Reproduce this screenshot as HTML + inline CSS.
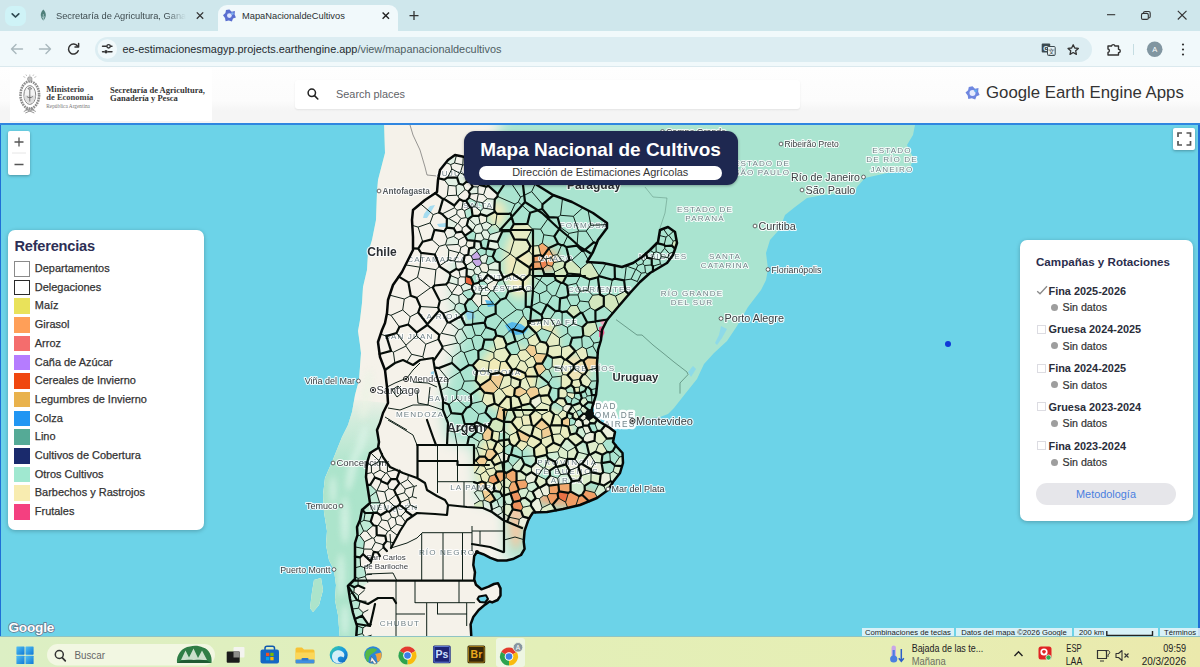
<!DOCTYPE html>
<html lang="es">
<head>
<meta charset="utf-8">
<title>MapaNacionaldeCultivos</title>
<style>
*{box-sizing:border-box;margin:0;padding:0}
html,body{width:1200px;height:667px;overflow:hidden;background:#6cd3e8;font-family:"Liberation Sans",sans-serif;color:#222}
.abs{position:absolute}
#tabbar{left:0;top:0;width:1200px;height:31px;background:#cfe7ec}
#toolbar{left:0;top:31px;width:1200px;height:36px;background:#f1f9fb;border-bottom:1px solid #dbe9ee}
#urlpill{left:95px;top:37px;width:997px;height:25px;border-radius:12.5px;background:#dcedf2}
#acttab{left:218px;top:5px;width:180px;height:27px;background:#f1f9fb;border-radius:9px 9px 0 0}
.tabtxt{font-size:9.3px;line-height:12px;color:#2a2f31;white-space:nowrap;top:9.5px}
#chev{left:5px;top:6px;width:21px;height:20px;border-radius:7px;background:#cff3f7}
#url{left:122.5px;top:43px;font-size:10.9px;line-height:13px;color:#1f2a2e;white-space:nowrap}
#url span{color:#4f5e63}
#header{left:0;top:67px;width:1200px;height:56px;background:linear-gradient(#fefefe 0,#fcfcfc 60%,#f5f5f5 78%,#f5f5f5 100%)}
#logoimg{left:10px;top:69px;width:202px;height:52px;background:#fff}
#search{left:295px;top:79.5px;width:505px;height:29.5px;background:#fff;border-radius:3px;box-shadow:0 1px 2px rgba(0,0,0,.08)}
#map{left:0;top:125px;width:1200px;height:512px;background:#6cd3e8;overflow:hidden}
#mapline{left:0;top:123px;width:1200px;height:2px;background:#2f86e0}
#taskbar{left:0;top:636.5px;width:1200px;height:30.5px;background:linear-gradient(90deg,#dcefc4 0%,#e3efb8 45%,#e6eeb4 75%,#ebe9ac 100%)}
.serif{font-family:"Liberation Serif",serif}
.panel{background:#fff;border-radius:7px;box-shadow:0 1px 4px rgba(0,0,0,.25)}
#legend{left:8px;top:230px;width:195.5px;height:299.5px}
#legend h3{position:absolute;left:6.4px;top:8px;font-size:14.6px;font-weight:bold;color:#2d2f55;letter-spacing:-0.2px}
.lg{position:absolute;left:6px;height:16px;font-size:10.96px;line-height:13px;color:#333;white-space:nowrap}
.lg i{position:absolute;left:0;top:0;width:16.3px;height:15.6px;display:block}
.lg span{position:absolute;left:20.8px;top:1px;-webkit-text-stroke:.25px #333}
svg text{font-family:"Liberation Sans",sans-serif}
.hl2{stroke-width:4.5px !important;stroke-opacity:.95 !important}
.hl{paint-order:stroke;stroke:#fff;stroke-width:2.2px;stroke-opacity:.85;stroke-linejoin:round}
#camp{left:1020px;top:239.5px;width:173px;height:281px}

#titlebox{left:463.5px;top:130.5px;width:274px;height:54px;border-radius:11px;background:#1e2850;box-shadow:0 1px 3px rgba(0,0,0,.3)}
#titlebox b{position:absolute;left:0;width:274px;top:7px;text-align:center;color:#fff;font-size:19px;line-height:24px;white-space:nowrap}
#titlebox span{position:absolute;left:15px;top:35.5px;width:243.5px;height:13.5px;border-radius:7px;background:#fff;color:#333;font-size:10.9px;line-height:13.5px;text-align:center;white-space:nowrap}
#zoomctl{left:8px;top:130.5px;width:22px;height:44px;background:#fff;border-radius:2px;box-shadow:0 1px 3px rgba(0,0,0,.3)}
#fsbtn{left:1172.5px;top:128px;width:22px;height:22px;background:#fff;border-radius:2px;box-shadow:0 1px 3px rgba(0,0,0,.3)}
#camp h4{position:absolute;left:16px;top:15.5px;font-size:11.6px;font-weight:bold;color:#2a2d4d;white-space:nowrap}
.cr{position:absolute;left:16px;font-size:10.9px;font-weight:bold;color:#2a2d3a;white-space:nowrap;height:14px;line-height:14px}
.cr i{position:absolute;left:1px;top:2.5px;width:9px;height:9px;border:1px solid #dcdce2;background:#fff;display:block}
.cr span{position:absolute;left:12.5px;top:0}
.sd{position:absolute;left:31px;font-size:10.7px;color:#333;white-space:nowrap;height:14px;line-height:14px}
.sd i{position:absolute;left:0;top:3.5px;width:7px;height:7px;border-radius:50%;background:#9e9e9e;display:block}
.sd span{position:absolute;left:11.5px;top:0;-webkit-text-stroke:.2px #333}
#metod{position:absolute;left:16px;top:243px;width:140px;height:22px;border-radius:11px;background:#e6e6ea;color:#4a7fe0;font-size:10.9px;line-height:22px;text-align:center}
#gee{left:986px;top:83px;font-size:16.8px;color:#333;white-space:nowrap;line-height:20px}
#sp{left:336px;top:87px;font-size:10.9px;color:#5f6368;white-space:nowrap;line-height:14px}
.tb{position:absolute;white-space:nowrap}

#attr{left:862px;top:627.5px;width:338px;height:9.5px}
#attr div{position:absolute;top:0;height:9.5px;background:rgba(240,248,250,.82);font-size:7.7px;line-height:9.5px;color:#222;white-space:nowrap;text-align:center}
#glogo{left:8.5px;top:619.5px;font-size:13.6px;font-weight:bold;color:#fff;letter-spacing:-0.2px;-webkit-text-stroke:1.5px #66748a;paint-order:stroke fill}
#tsearch{left:46.5px;top:643px;width:167px;height:20px;border-radius:10px;background:#f1f7e0}
.tk{position:absolute;font-size:10.5px;color:#222;white-space:nowrap;line-height:12px}
.edgeL{left:0;top:125px;width:1.2px;height:512px;background:#1f6fd6}
.edgeR{left:1198.4px;top:125px;width:1.6px;height:512px;background:#1f6fd6}
#map svg{filter:blur(.35px)}
</style>
</head>
<body>
<div id="tabbar" class="abs"></div>
<div id="toolbar" class="abs"></div>
<div id="acttab" class="abs"></div>
<div id="chev" class="abs"></div>
<div id="urlpill" class="abs"></div>
<div class="abs tabtxt" style="left:56px;color:#3f4c50;width:130px;overflow:hidden;-webkit-mask-image:linear-gradient(90deg,#000 85%,transparent 100%);mask-image:linear-gradient(90deg,#000 85%,transparent 100%)">Secretaría de Agricultura, Ganadería</div>
<div class="abs tabtxt" style="left:242px">MapaNacionaldeCultivos</div>
<div id="url" class="abs">ee-estimacionesmagyp.projects.earthengine.app<span>/view/mapanacionaldecultivos</span></div>
<div id="header" class="abs"></div>
<div id="logoimg" class="abs"></div>
<div id="search" class="abs"></div>
<div id="mapline" class="abs"></div>
<div id="map" class="abs">
<svg class="abs" style="left:0;top:-125px" width="1200" height="667" viewBox="0 0 1200 667">
<defs>
<clipPath id="baclip"><path d="M594 398L594 414L600 421L610 427L616 431L650 431L650 398Z"/></clipPath>
<clipPath id="argclip"><path d="M455 155L448 160L440 170L438 180L437 192L425 200L413 210L412 220L413 237L413 250L408 260L402 272L393 285L388 300L387 313L385 323L382 330L378 342L380 357L385 370L387 387L388 403L383 413L380 423L377 430L379 442L378 448L370 453L367 463L366 477L368 490L370 503L362 510L360 520L357 527L357.5 535L355 543L355 559L355 579L348 586L350 599L353 613L357 626L356 640L471.5 640L470.6 624.4L473.3 617L478.7 610L485 604.6L489.5 601.5L492.2 602.4L497.6 600L500.5 595.6L500.5 588.4L498 583.3L494 584L488.6 586.6L481.4 589.3L476 584.8L474.2 579.4L475 572.2L473.3 565L474.2 556L476.9 552L483.2 554.2L490.4 557.8L497.6 560.5L506.6 560.5L513.8 558.7L521 555L524.6 548.8L523.7 541.6L524.6 530.8L528 521L530 517L533 512.5L547 512L563 509L580 505L597 498L608 490L613 482L620 473L623 463L622.5 453L617 447L613 442L615 432L610 428L600 422L592 415L592 408L596 395L597.5 381L597 363L598 350L601 340L602 330L607 320L618 307L630 293L640 282L650 273L667 263L673 255L677 243L675 232L668 227L660 230L658 242L650 250L642 257L633 263L622 267L603 263L587 262L593 252L598 240L607 228L607 223L593 213L572 202L553 195L537 185L525 175L520 165L500 160L470 158Z"/></clipPath>
<filter id="b4" x="-30%" y="-30%" width="160%" height="160%"><feGaussianBlur stdDeviation="4"/></filter>
<clipPath id="landclip"><path d="M384 121L385 153L378 180L377 192L376 220L372 240L368 253L367 270L363 287L362 303L360 320L358 331L360 345L361 353L359 380L355 395L352 412L348 425L342 437L336 452L332 462L325 478L323 495L324 512L327 531L326 545L329 560L334 570L336 585L335 600L338 615L340 640L471.5 640L470.6 624.4L473.3 617L478.7 610L485 604.6L489.5 601.5L492.2 602.4L497.6 600L500.5 595.6L500.5 588.4L498 583.3L494 584L488.6 586.6L481.4 589.3L476 584.8L474.2 579.4L475 572.2L473.3 565L474.2 556L476.9 552L483.2 554.2L490.4 557.8L497.6 560.5L506.6 560.5L513.8 558.7L521 555L524.6 548.8L523.7 541.6L524.6 530.8L528 521L530 517L533 512.5L547 512L563 509L580 505L597 498L608 490L613 482L620 473L623 463L622.5 453L617 447L613 442L615 432L610 428L600 422L592 415L593 408L600 409L617 417L633 421L642 419.5L660 417L668 414L674 408L685 394L697 379L704 364L714 353L727 341L737 326L748 307L761 290L766 280L768 269L766 253L770 240L778 231L782 223L785 215L795 207L807 198L823 195L855 193L857 187L865 178L887 173L910 170L913 157L907 145L913 135L915 125L916 121Z"/><path d="M314 580L321 578L323 590L319 605L313 612L310 608L312 592Z"/></clipPath>
<filter id="b8" x="-30%" y="-30%" width="160%" height="160%"><feGaussianBlur stdDeviation="7"/></filter>
<filter id="b3" x="-30%" y="-30%" width="160%" height="160%"><feGaussianBlur stdDeviation="3"/></filter>
<linearGradient id="chs" gradientUnits="userSpaceOnUse" x1="0" y1="395" x2="0" y2="470"><stop offset="0" stop-color="#a6e2c9" stop-opacity="0"/><stop offset=".35" stop-color="#b4e7d0" stop-opacity=".55"/><stop offset="1" stop-color="#ace4cb" stop-opacity="1"/></linearGradient>
</defs>
<path d="M384 121L385 153L378 180L377 192L376 220L372 240L368 253L367 270L363 287L362 303L360 320L358 331L360 345L361 353L359 380L355 395L352 412L348 425L342 437L336 452L332 462L325 478L323 495L324 512L327 531L326 545L329 560L334 570L336 585L335 600L338 615L340 640L471.5 640L470.6 624.4L473.3 617L478.7 610L485 604.6L489.5 601.5L492.2 602.4L497.6 600L500.5 595.6L500.5 588.4L498 583.3L494 584L488.6 586.6L481.4 589.3L476 584.8L474.2 579.4L475 572.2L473.3 565L474.2 556L476.9 552L483.2 554.2L490.4 557.8L497.6 560.5L506.6 560.5L513.8 558.7L521 555L524.6 548.8L523.7 541.6L524.6 530.8L528 521L530 517L533 512.5L547 512L563 509L580 505L597 498L608 490L613 482L620 473L623 463L622.5 453L617 447L613 442L615 432L610 428L600 422L592 415L593 408L600 409L617 417L633 421L642 419.5L660 417L668 414L674 408L685 394L697 379L704 364L714 353L727 341L737 326L748 307L761 290L766 280L768 269L766 253L770 240L778 231L782 223L785 215L795 207L807 198L823 195L855 193L857 187L865 178L887 173L910 170L913 157L907 145L913 135L915 125L916 121Z" fill="#aae4d0"/>
<path d="M314 580L321 578L323 590L319 605L313 612L310 608L312 592Z" fill="#a5e0c4"/>
<g clip-path="url(#landclip)">
<path d="M300 100L508 100L492 150L472 178L463 200L457 250L453 300L462 330L453 360L442 400L447 440L474 446L478 500L505 508L506 560L535 560L535 650L300 650Z" fill="#f5f2ea" filter="url(#b8)"/>
<path d="M300 395L388 403L383 413L380 423L377 430L379 442L378 448L370 453L367 463L366 477L368 490L370 503L362 510L360 520L357 527L357.5 535L355 543L355 559L355 579L348 586L350 599L353 613L357 626L356 640L300 640Z" fill="url(#chs)"/>
<g filter="url(#b3)" fill="#dcf4e8" opacity=".8"><ellipse cx="352" cy="470" rx="4" ry="22" transform="rotate(12 352 470)"/><ellipse cx="345" cy="520" rx="4" ry="24"/><ellipse cx="341" cy="575" rx="3.5" ry="22"/><ellipse cx="345" cy="620" rx="3.5" ry="16"/><ellipse cx="362" cy="440" rx="4" ry="16" transform="rotate(15 362 440)"/><ellipse cx="333" cy="490" rx="3" ry="14"/></g>
<g filter="url(#b3)" fill="#eaf3e4" opacity=".7"><ellipse cx="366" cy="395" rx="5" ry="26" transform="rotate(8 366 395)"/></g>
<path d="M721 326L727 329L722 338L717 345L715 343L719 335Z" fill="#8ad8ec" opacity=".85"/>
<path d="M688 372L693 366L696 369L691 377Z" fill="#8ad8ec" opacity=".85"/>
</g>
<g fill="none" stroke="#3d6b5a" stroke-width=".8" stroke-opacity=".75">
<path d="M616 319.6L637 335L642 335L653 345L663 353L674 362L687 372L688 374.6L680 383L680 393.6"/>
<path d="M410 125L413 135L420 150L425 167L427 175L437 176" stroke="#555"/>
<path d="M645 187L653 197L667 198L665 213L660 228" stroke-opacity=".45"/>
</g>
<g class="lbl"><text x="476" y="431.9" font-size="12.5" font-weight="bold" text-anchor="middle" fill="#2b2f33" class="hl">Argentina</text></g>
<g clip-path="url(#argclip)"><g filter="url(#b4)" stroke="none">
<ellipse cx="519" cy="264" rx="15" ry="34" fill="#f1ebbd"/><ellipse cx="497" cy="214" rx="9" ry="14" fill="#f1ebbd"/>
<ellipse cx="547" cy="260" rx="11" ry="11" fill="#f3b583"/>
<ellipse cx="508" cy="378" rx="30" ry="34" fill="#f1ebb8"/><ellipse cx="540" cy="428" rx="34" ry="20" fill="#efecc0"/>
<ellipse cx="489" cy="466" rx="12" ry="30" fill="#f1ebb8"/><ellipse cx="546" cy="345" rx="13" ry="25" fill="#f1e6b4"/>
<ellipse cx="575" cy="370" rx="15" ry="17" fill="#f0e3b6"/>
<ellipse cx="566" cy="498" rx="31" ry="8" fill="#f3a878"/><ellipse cx="516" cy="508" rx="8" ry="42" fill="#f4c9a4"/>
<ellipse cx="560" cy="455" rx="30" ry="18" fill="#d5eed5"/>
</g></g>
<g stroke="none"><path fill="#d4e8bf" d="M488.4 427L492.6 430.9L499.6 432L502.7 430.1L504 421.9L496.1 418.5L492.1 419.6ZM570.8 305.7L566.6 311.4L573.6 317.8L580.7 312.6L577 305.4ZM589.8 279.4L597.9 277.3L599.1 276.1L599.1 275.8L590.9 262.2L588.7 262.1L580.8 268.8L580.2 274.7L580.5 275.4ZM615.5 296L609.3 293.8L603.8 296.4L603.8 305.8L612.7 313.3L618 307L619.1 305.8ZM564.4 267.1L554.7 271.9L553.9 274.1L555.8 280L560.8 282.8L562.9 282.7L567.7 273.5ZM603.8 296.4L600 294.5L592.6 295.2L588.6 301.9L590.4 307.9L595.4 310.7L603.8 305.8ZM580.8 268.8L571.8 260.2L569.5 260L565.5 262.6L564.4 267.1L567.7 273.5L580.2 274.7ZM595.3 321.6L587.2 322.5L582.6 327.1L583.3 335.5L589.6 336.7L597.7 330ZM522.8 331.9L528.4 325.6L527.9 321.2L523.5 315.6L513.5 329.3ZM554.7 271.9L564.4 267.1L565.5 262.6L562.2 261L553.9 262.6L552.3 266.5ZM625.4 291.1L615.5 296L619.1 305.8L629 294.2ZM675.1 248.7L677 243L676.5 240.1L673.2 241.1L671.8 245.6ZM482.8 500.9L479.9 500.7L474 504.1L474 508L483 508L483.6 508.3Z"/><path fill="#eaecc0" d="M517 431.8L509.8 435.4L508.9 439.4L510.2 443.7L513 445.8L515.6 445.6L519.8 440.4ZM517.3 354.4L520.4 360.4L524.7 361.5L531.3 356.4L525.5 349.6L520 350.5ZM570.4 434.6L568.2 426.5L562 425.2L561.8 425.3L560.1 433.8L565.2 439L567.7 438.5ZM549.6 426.3L549.6 426.3L551.1 425.2L554.1 414.3L550.1 410.6L541.9 414.8L541.8 418.8ZM496.8 442.1L493.6 449.5L497 453.8L498 454L502.8 452L503.7 447.8L498.2 441.6ZM489.6 476.4L485.9 470.9L480.2 474.8L482.1 481.5L485.6 482.9L488 481.7Z"/><path fill="#deeecd" d="M567.6 458.8L567.7 451.3L560.7 446.5L557.9 451.7L559.4 456.9L567 459.2ZM502.8 496L510.4 493.4L510.5 493.3L508.7 487.9L502.2 486.6L500 491.8L502.4 495.9Z"/><path fill="#d6eed3" d="M516.5 471.5L520.3 470.8L524.3 464.1L521.5 457.6L520.6 457.8L512.7 466.3L512.8 469.2ZM619.6 456.9L614.4 464.8L614.7 465.7L622 466.2L623 463L622.7 456.4Z"/><path fill="#f2aa6e" d="M516.5 471.5L512.8 469.2L506.3 473L506.1 477.6L511.5 482L515.8 481.7L516.6 480.7Z"/><path fill="#e4f1e4" d="M494.2 209.7L494.8 199.3L487.3 198.7L482.7 202.7L483.3 208.1ZM487.5 284.1L494.6 279.9L487.7 274.7L483.2 280.4ZM486.5 221.8L481.1 224.1L483.3 230L487.3 230.1L492.2 224.9ZM478.2 274.9L481.7 271.9L479.3 266.3L476.2 266.5L473.5 270L474.8 273.8ZM481.7 295.7L487.1 295.5L490.8 290.8L487 287.3L482.2 289L480.2 294.1ZM480.1 223.6L478.6 215.9L472.6 215.8L468.9 218.7L475.6 225.3ZM474.7 293.7L480.2 294.1L482.2 289L478.4 282.7L473.6 284L472.3 285.7L471.9 288.7ZM473.5 270L466.8 268.8L466.5 276.1L470.9 277.4L474.8 273.8ZM490 234.5L487.3 230.1L483.3 230L481.2 233L484 238.9L488.3 239.7ZM483.3 230L481.1 224.1L480.1 223.6L475.6 225.3L472.9 230.7L475.9 233.5L481.2 233ZM487.7 274.7L494.6 279.9L498.7 280.5L502.6 279.2L503.3 277.7L499.7 270.3L488.7 269.7L487.1 272.7ZM472.3 230.7L472.9 230.7L475.6 225.3L468.9 218.7L468.5 218.8L466.8 225.2ZM494.2 209.7L483.3 208.1L480.6 211.1L480.4 214.1L486.8 216.1L494.9 211.7ZM497.6 241.9L502.3 231.5L501.5 231L490 234.5L488.3 239.7L488.9 240.5ZM487.3 248.4L495.2 250L499.4 247.8L497.6 241.9L488.9 240.5ZM481.2 233L475.9 233.5L474.7 240.8L480.4 241.7L484 238.9ZM480.5 256.3L479.8 258.9L482.1 263.1L485.9 263.3L487.9 256.2L486 254.1ZM483.2 280.4L487.7 274.7L487.1 272.7L481.7 271.9L478.2 274.9L479.8 280.9ZM474.7 240.8L474.6 240.9L474.1 247.3L477 250.3L481.7 247.7L480.4 241.7ZM476.2 266.5L472.3 261.5L465.9 265.5L465.8 267.5L466.8 268.8L473.5 270ZM471.2 256L476.9 251.2L477 250.3L474.1 247.3L469.1 248.3L468.3 254.7ZM495.8 261.2L488 265L488.7 269.7L499.7 270.3L499.7 262.5Z"/><path fill="#bae8d4" d="M362.9 627.9L368.2 624.3L362.1 615.7L354.8 618.9L356.9 625.8Z"/><path fill="#e3eec9" d="M575.7 446L583 441L582.8 438.9L576.2 433.3L570.4 434.6L567.7 438.5Z"/><path fill="#c3ead6" d="M358.5 599.7L358.5 595.5L353.9 591.9L349.4 594.9L350 599L350.5 601.5Z"/><path fill="#e0eecb" d="M502.5 512.3L508.8 516.6L512.8 509.3L511.5 504.8L506.3 504.2L501.5 507.4ZM574.8 459L577.8 452.1L575.5 447L567.7 451.3L567.6 458.8ZM525.3 479.9L526.3 475.2L520.3 470.8L516.5 471.5L516.6 480.7ZM542.1 507.8L539.8 512.3L547 512L556.1 510.3L552.6 504.7L550.4 503.8ZM544.8 467.8L549.6 470.7L556.2 466.4L555 461.7L548.1 458.3ZM565.9 464.4L567 459.2L559.4 456.9L555 461.7L556.2 466.4L557.2 466.9ZM498.2 441.6L503.7 447.8L510.2 443.7L508.9 439.4L498.8 440.8Z"/><path fill="#f19d65" d="M594.7 492.6L584.8 490.2L582.1 494.7L589 501.3L597 498L597.5 497.6Z"/><path fill="#e7edc4" d="M551.6 332.2L546 342.9L548.3 346.6L559.3 345.1L559.5 338.1ZM513.8 224.1L510 230.8L514.4 239.4L526.7 239.8L532.3 228.9L527.4 223.8ZM510.7 385.1L511.3 377L510 374.7L503.9 375.5L499.1 388.5L501 389.2ZM510.6 397.4L511.2 408.4L512.3 408.8L521 406.5L521.8 405.3L518.6 397.4L514.1 395.6ZM558.4 398L564.3 398.5L567 395.4L567.2 392.5L565.4 388.7L561.1 387.6L558.5 389ZM564.4 359.5L566.2 359.6L575.3 351.1L570 345.3L561.7 347.4L561.3 356.6ZM574.8 393.2L567.2 392.5L567 395.4L572.1 398.9L574.2 397.5Z"/><path fill="#ebecbe" d="M536.2 457.4L546.4 454.9L547.1 453.1L546.3 447.7L541 442.8L533.9 448.3L534.5 455.8ZM527 442.3L519.8 440.4L515.6 445.6L522.2 451.1L527.7 444.9ZM533.9 426.3L531.3 435.6L540.8 440.2L542 438.6L541.6 430.2L534.3 426.2ZM533.9 448.3L541 442.8L540.8 440.2L531.3 435.6L530 436.3L527 442.3L527.7 444.9ZM501.5 462.3L498 454L497 453.8L491.2 460L494.6 465.1Z"/><path fill="#ecf0de" d="M583 441L586.5 443L594.5 440.8L595.1 432.7L591.4 431.8L585.6 434.1L582.8 438.9ZM535.7 498.4L539.3 498.7L543.3 495.6L539.8 487.7L538.7 487.4L532.6 491.8ZM578.1 428L582.4 426.8L583.3 425.6L582.3 421L578.9 418.5L576.1 419.8L574.4 424.6ZM507.8 460.9L509.2 455.4L502.8 452L498 454L501.5 462.3L502.4 462.7ZM590.9 469.2L591.5 472.3L600.7 474.2L603.2 472.4L601.6 463.1L601.5 463L595 462.5ZM613.8 438.1L615 432L610 428L605.3 425.2L600.8 430.8L606.9 438.6ZM599.6 483.9L603.7 485.6L610.6 481.1L609.9 473.6L603.2 472.4L600.7 474.2ZM531.5 472.1L537.3 476.1L538.2 475.8L543.1 468.1L535.8 462.6L531.3 467ZM523.2 516.6L519.3 519.4L518.5 524.7L525.9 527L528 521L529.3 518.4ZM542.1 507.8L539.3 498.7L535.7 498.4L531.2 502.3L530.9 505.6L535.4 512.4L539.8 512.3ZM581.9 464L590.9 469.2L595 462.5L590.1 454.7L589.2 454.5L588.5 454.8ZM579.4 464.8L578.4 466.9L581.1 475.6L591.1 472.7L591.5 472.3L590.9 469.2L581.9 464ZM572.3 405.9L572.3 405.8L570.6 404.1L566.8 403.9L563 407.1L562.9 410L567.5 412.7L568 412.6ZM578.4 466.9L579.4 464.8L574.8 459L567.6 458.8L567 459.2L565.9 464.4L569.4 470.5ZM579.1 417.6L578.9 418.5L582.3 421L587.4 417.7L585.7 413.9L583.2 413.7ZM588.4 425.3L583.3 425.6L582.4 426.8L585.6 434.1L591.4 431.8ZM541.5 402.5L540.5 395.9L539.3 394.9L530.8 399.2L530.2 403.5L534.7 408.5ZM557.7 478.3L550.1 475.6L546.3 479.8L546.6 483.7L549 485.7L558.4 484.5L558.6 484.2ZM549.5 493.6L549 485.7L546.6 483.7L539.8 487.7L543.3 495.6L547.1 495.9ZM525.3 479.9L527.6 483.6L535.2 481.7L537.3 476.1L531.5 472.1L526.3 475.2ZM588.4 425.3L590.2 423.2L588.8 418.3L587.4 417.7L582.3 421L583.3 425.6Z"/><path fill="#d0eed7" d="M576.2 433.3L582.8 438.9L585.6 434.1L582.4 426.8L578.1 428ZM532.6 491.8L538.7 487.4L535.2 481.7L527.6 483.6L526.8 487.9L528.6 490.8ZM506.3 504.2L511.5 504.8L513.3 502L510.4 493.4L502.8 496Z"/><path fill="#dceece" d="M582.3 405.9L579.9 402.9L572.3 405.8L572.3 405.9L576 411.4L576.2 411.5L580.4 409.6ZM579.1 480.4L584.6 485.9L590.9 481.9L591.1 472.7L581.1 475.6ZM520.3 470.8L526.3 475.2L531.5 472.1L531.3 467L524.3 464.1Z"/><path fill="#ef915c" d="M512.8 509.3L521.1 511L522.9 507.3L520.1 500.6L513.3 502L511.5 504.8Z"/><path fill="#e9edc2" d="M540.7 255L538.5 245.6L530.3 246.3L528.7 250.7L533.4 256.1ZM485.6 482.9L485.5 487.7L491.4 493L494.2 490.8L494 484L488 481.7ZM567.5 375.1L573.8 368.4L573.7 365.1L566.2 359.6L564.4 359.5L560.9 368.6L562.8 374.6Z"/><path fill="#eaecbf" d="M530.2 403.5L530.8 399.2L526.5 392.7L518.6 397.4L521.8 405.3ZM579.3 387.1L573.9 387.6L574.8 393.2L579.5 392.7ZM517.9 430.4L518.6 430.1L523 425.5L521.5 417.2L515.5 417.1L511.5 422.1ZM506.6 396.4L498.6 405.6L499 406.3L507.7 409.6L511.2 408.4L510.6 397.4ZM536 333.1L536 333.1L541.8 328.6L541.3 320.1L527.9 321.2L528.4 325.6Z"/><path fill="#f1ce95" d="M530.2 387.3L526.7 390.8L526.5 392.7L530.8 399.2L539.3 394.9L538.2 388.7L535.5 386.8ZM482.1 481.5L477.5 483.3L477.1 490.6L482.2 491.1L485.5 487.7L485.6 482.9ZM484.4 392.6L493.2 393.6L498.4 388.6L490.1 378.8L480 385.6L480.1 387.8ZM536.4 363.7L542.1 363.6L547.2 354.6L547 354.2L536.7 353.3L533.3 356.6ZM542 438.6L551.8 435.2L552.1 434.6L549.6 426.3L549.6 426.3L541.6 430.2ZM568.2 426.5L569.5 425.5L569.6 418.9L566.8 417.2L561.9 419.8L562 425.2ZM486.9 450.3L485 456.6L487.6 459.8L491.2 460L497 453.8L493.6 449.5L488.5 449.1ZM518.6 397.4L526.5 392.7L526.7 390.8L519.5 386.5L514.9 388.7L514.1 395.6ZM530 436.3L518.6 430.1L517.9 430.4L517 431.8L519.8 440.4L527 442.3ZM482.6 434.2L483 439.2L486.4 440.8L491.4 439.3L492.6 430.9L488.4 427L487.6 427.2ZM587.9 357.2L583.4 360.6L587.2 370.4L597.1 368.2L597 363L597.4 358ZM539.3 375.7L546 369.3L542.1 363.6L536.4 363.7L534.3 366.7L538.1 375.7ZM498.4 388.6L499.1 388.5L503.9 375.5L498.8 372.6L490.9 374.3L490.1 378.8ZM541.6 430.2L549.6 426.3L541.8 418.8L534.3 426.2ZM479.4 456.7L475.8 460.5L479.6 465.5L484.3 466.2L487.6 459.8L485 456.6ZM484.4 498.9L484 500L490.6 502.8L495.3 499.8L491.4 493.2ZM533.3 356.6L536.7 353.3L535.3 346L529.2 344.9L525.5 349.6L531.3 356.4ZM482.2 491.1L484.4 498.9L491.4 493.2L491.4 493L485.5 487.7ZM499 406.3L496.1 418.5L504 421.9L504.5 421.6L507.7 409.6Z"/><path fill="#e9ecc1" d="M520.4 360.4L515.5 368.7L525.2 373.2L528.2 367.8L524.7 361.5ZM541 442.8L546.3 447.7L553.6 442.7L551.8 435.2L542 438.6L540.8 440.2ZM475.2 472.7L479.6 465.5L475.8 460.5L474 460.6L474 472.9ZM482 401.2L487.4 406.6L494.7 403.5L493.2 393.6L484.4 392.6Z"/><path fill="#f2aa6f" d="M511.5 482L508.7 487.9L510.5 493.3L517.8 491.1L518.8 489.4L515.8 481.7Z"/><path fill="#e8edc3" d="M548.3 346.6L547 354.2L547.2 354.6L552.4 357.8L561.3 356.6L561.7 347.4L559.3 345.1ZM529.5 274.5L529.9 269.5L529.3 267.5L516.6 258.9L512.2 273.8L522.9 280.6ZM581.5 384.6L579.9 379.2L572.2 380.5L571 385L573.9 387.6L579.3 387.1ZM548.5 384.4L538.2 388.7L539.3 394.9L540.5 395.9L548.4 395.1L551 387.6Z"/><path fill="#e9edc1" d="M548.4 395.1L540.5 395.9L541.5 402.5L550.6 405.7L552.8 402.5ZM490.1 378.8L490.9 374.3L488.4 371L477.1 371L475.7 380.7L480 385.6ZM486.1 469.6L485.9 470.9L489.6 476.4L495.3 474.4L496.5 471.7L494.1 467.7ZM494.2 490.8L500 491.8L502.2 486.6L500.4 481.9L498.9 481.6L494 484ZM499.6 432L492.6 430.9L491.4 439.3L496.8 442.1L498.2 441.6L498.8 440.8ZM524.7 361.5L528.2 367.8L534.3 366.7L536.4 363.7L533.3 356.6L531.3 356.4Z"/><path fill="#e6edc7" d="M586.6 387.4L588.1 387L591.5 381.1L584.9 374L582.9 374.7L579.9 379.2L581.5 384.6ZM561.8 425.3L551.1 425.2L549.6 426.3L552.1 434.6L560.1 433.8Z"/><path fill="#f1a168" d="M494 484L498.9 481.6L495.3 474.4L489.6 476.4L488 481.7ZM547.3 265.2L552.3 266.5L553.9 262.6L551.4 257.7L545.8 259Z"/><path fill="#e2f0e4" d="M472.3 285.7L465.4 283.1L460.8 286.1L463.2 291.4L471.9 288.7ZM457.5 284.9L458 284.8L458.1 278.6L450.4 275.5L448.1 282.4ZM459 183.7L457.1 177.6L447.5 177.6L444.2 179.6L448.4 185.4L456 186ZM477.9 187L472.6 186.7L468.6 191.4L469.9 194.1L477.9 193.4ZM447.2 238.5L445.5 244.6L446.1 245.1L458.2 244.4L458.7 239.8L453.7 236.4ZM482.6 177.2L479 181L479.8 184.9L486.2 186.6L488.5 185.9L490 180.9ZM465.3 175.3L460.3 172.9L459.7 173.2L457.1 177.6L459 183.7L463 184.8L466.4 181.7ZM465 189.6L463 184.8L459 183.7L456 186L456.6 195.2L457.9 195.9ZM464.8 304.7L468.3 299.6L462.5 293.5L458.8 295.5L459.2 303ZM475.1 171.6L473 172.7L474.1 178.3L479 181L482.6 177.2L482.7 173.6ZM458.8 295.5L451.9 294L448.1 298.4L455.6 304.8L459.2 303ZM448.8 218.6L446.9 218.7L446.7 227.7L453.7 228.3L457.4 223.5ZM450.6 164.6L454.5 163L456.4 155.3L455 155L448 160L446 162.5Z"/><path fill="#e6edc6" d="M531.3 435.6L533.9 426.3L531.8 424.9L523 425.5L518.6 430.1L530 436.3ZM541.9 414.8L550.1 410.6L550.6 405.7L541.5 402.5L534.7 408.5L535 410.3ZM520.5 380.3L519.5 386.5L526.7 390.8L530.2 387.3L525.7 377.2ZM528.7 250.7L530.3 246.3L526.7 239.8L514.4 239.4L510.1 253.7L510.2 253.9L516.5 258.7ZM564.4 359.5L561.3 356.6L552.4 357.8L552.1 366.7L560.9 368.6ZM519.5 386.5L520.5 380.3L511.3 377L510.7 385.1L514.9 388.7Z"/><path fill="#ed8352" d="M543.3 257.7L540 261.8L541.8 268.5L542.6 269L547.3 265.2L545.8 259Z"/><path fill="#f09c64" d="M565.6 502.2L567.7 507.9L575.7 506L579.1 496.1L570.6 491.5L568.4 492.9Z"/><path fill="#f3f2ea" d="M478.3 193.9L483.6 194.7L486.2 186.6L479.8 184.9L477.9 187L477.9 193.4ZM479 164.5L484 167.1L486.7 165L486.6 159.1L480.2 158.7ZM463.5 262L465.9 265.5L472.3 261.5L472.8 259.6L471.2 256L468.3 254.7L464.7 255.5ZM488.5 185.9L486.2 186.6L483.6 194.7L487.3 198.7L494.8 199.3L497.5 196.4L497.7 194.1ZM461.9 231.6L465.1 235.7L472.3 230.7L466.8 225.2L462.3 227.8ZM454.5 163L450.6 164.6L451.8 169L459.7 173.2L460.3 172.9L462.7 164.9ZM486.7 165L492.7 166.4L496.5 159.8L486.6 159.1ZM468.3 254.7L469.1 248.3L465.8 245.2L460.8 247.4L459.8 252.3L464.7 255.5ZM458 223.4L457.4 223.5L453.7 228.3L456.1 232.5L461.9 231.6L462.3 227.8ZM460.8 286.1L458 284.8L457.5 284.9L451.8 293L451.9 294L458.8 295.5L462.5 293.5L463.2 291.4ZM454.5 163L462.7 164.9L462.8 164.8L463.3 156.7L456.4 155.3ZM456.7 214.1L461 218.5L465.9 217.6L464.5 210.7L461.9 209.1L457 210.3ZM459.8 252.3L460.8 247.4L458.2 244.4L446.1 245.1L448.8 250L458.9 252.7ZM462.7 164.9L460.3 172.9L465.3 175.3L471.9 172.4L467.8 165.6L462.8 164.8ZM463.5 262L455.3 261.8L456.3 268.9L458.8 269.9L465.8 267.5L465.9 265.5ZM457 210.3L461.9 209.1L463.2 200.9L459.6 199.2L454.3 205.5L454.5 207.8ZM466 200.7L469 197.8L469.9 194.1L468.6 191.4L465 189.6L457.9 195.9L459.6 199.2L463.2 200.9ZM469.9 194.1L469 197.8L476.6 201.8L476.8 201.7L478.3 193.9L477.9 193.4ZM462.8 164.8L467.8 165.6L471.5 162.4L471.9 158.1L470 158L463.3 156.7ZM465.8 267.5L458.8 269.9L460.3 276.8L465.3 277L466.5 276.1L466.8 268.8ZM466.8 225.2L468.5 218.8L465.9 217.6L461 218.5L458 223.4L462.3 227.8ZM458.7 239.8L458.2 244.4L460.8 247.4L465.8 245.2L467.4 240.2L465.1 236.3ZM451.8 293L457.5 284.9L448.1 282.4L445.9 284.3ZM458.9 252.7L448.8 250L448.2 260.1L454.6 261ZM467.8 165.6L471.9 172.4L473 172.7L475.1 171.6L477.7 165.2L471.5 162.4ZM470.3 181.8L466.4 181.7L463 184.8L465 189.6L468.6 191.4L472.6 186.7ZM458 223.4L461 218.5L456.7 214.1L448.8 218.6L457.4 223.5ZM464.5 210.7L470.2 207.4L466 200.7L463.2 200.9L461.9 209.1ZM465.3 277L460.3 276.8L458.1 278.6L458 284.8L460.8 286.1L465.4 283.1ZM494 173.5L484.5 171.6L482.7 173.6L482.6 177.2L490 180.9L495.7 175.6ZM456.1 232.5L453.7 236.4L458.7 239.8L465.1 236.3L465.1 235.7L461.9 231.6ZM454.3 205.5L459.6 199.2L457.9 195.9L456.6 195.2L447.3 195.7L443.8 198.8ZM484 167.1L479 164.5L477.7 165.2L475.1 171.6L482.7 173.6L484.5 171.6ZM456.6 195.2L456 186L448.4 185.4L447.3 195.7ZM459.8 252.3L458.9 252.7L454.6 261L455.3 261.8L463.5 262L464.7 255.5ZM474.1 178.3L473 172.7L471.9 172.4L465.3 175.3L466.4 181.7L470.3 181.8ZM479.8 184.9L479 181L474.1 178.3L470.3 181.8L472.6 186.7L477.9 187ZM447.5 177.6L457.1 177.6L459.7 173.2L451.8 169ZM487.3 198.7L483.6 194.7L478.3 193.9L476.8 201.7L482.7 202.7ZM446.9 218.7L448.8 218.6L456.7 214.1L457 210.3L454.5 207.8L442 214ZM458.8 269.9L456.3 268.9L449.6 273L450.4 275.5L458.1 278.6L460.3 276.8ZM471.5 162.4L477.7 165.2L479 164.5L480.2 158.7L471.9 158.1ZM494 173.5L492.7 166.4L486.7 165L484 167.1L484.5 171.6Z"/><path fill="#e7edc5" d="M493.8 352.7L494 357.8L500.7 361.8L506.2 361.2L510.4 354.7L505.7 347.5L495.8 349.8ZM506.2 361.2L512.3 369.8L515.5 368.7L520.4 360.4L517.3 354.4L510.4 354.7ZM540.3 341.5L535.3 346L536.7 353.3L547 354.2L548.3 346.6L546 342.9ZM506.6 396.4L501 389.2L499.1 388.5L498.4 388.6L493.2 393.6L494.7 403.5L498.6 405.6ZM494.6 465.1L491.2 460L487.6 459.8L484.3 466.2L486.1 469.6L494.1 467.7ZM496.4 335.5L493.3 339.7L495.8 349.8L505.7 347.5L506.7 344.7L503.3 336.9ZM560.1 433.8L552.1 434.6L551.8 435.2L553.6 442.7L560.6 445.7L565.2 439Z"/><path fill="#f2a56b" d="M558.4 484.5L549 485.7L549.5 493.6L557.6 493.7L559.1 491.4Z"/><path fill="#e9ecc0" d="M489.4 361.7L478.5 359L472.7 365.3L477.1 371L488.4 371Z"/><path fill="#aae4d0" d="M505.7 347.5L510.4 354.7L517.3 354.4L520 350.5L517 341.8L515.6 341.2L506.7 344.7ZM576.1 419.8L572.7 417.8L569.6 418.9L569.5 425.5L574.4 424.6ZM552.4 357.8L547.2 354.6L542.1 363.6L546 369.3L548.8 369.6L552.1 366.7ZM567 395.4L564.3 398.5L566.8 403.9L570.6 404.1L572.1 398.9ZM541.8 328.6L536 333.1L540.3 341.5L546 342.9L551.6 332.2L551.5 332Z"/><path fill="#f0f0e2" d="M471.2 298.9L478.5 307.6L481.6 304.6L481.7 295.7L480.2 294.1L474.7 293.7ZM480.4 214.1L478.6 215.9L480.1 223.6L481.1 224.1L486.5 221.8L486.8 216.1ZM487.1 272.7L488.7 269.7L488 265L485.9 263.3L482.1 263.1L479.3 266.3L481.7 271.9ZM480.6 211.1L474.7 206.3L471.5 207.8L472.6 215.8L478.6 215.9L480.4 214.1ZM467.4 240.2L465.8 245.2L469.1 248.3L474.1 247.3L474.6 240.9ZM493.5 304.1L487.1 295.5L481.7 295.7L481.6 304.6ZM493.2 290.8L498.7 280.5L494.6 279.9L487.5 284.1L487 287.3L490.8 290.8Z"/><path fill="#c5ebd7" d="M356.3 635.2L356 640L364.5 640L365 637.2L362.4 633.6ZM370.7 521.6L373.4 512.9L365.1 513L363.9 520.3Z"/><path fill="#d1eed7" d="M555 461.7L559.4 456.9L557.9 451.7L547.1 453.1L546.4 454.9L548.1 458.3ZM597.6 430.9L600.8 430.8L605.3 425.2L600 422L597.3 419.7L594.8 423.4Z"/><path fill="#d4edd4" d="M572 481.1L570.5 483.3L570.6 491.5L579.1 496.1L582.1 494.7L584.8 490.2L584.6 485.9L579.1 480.4Z"/><path fill="#d7eed2" d="M577.8 452.1L574.8 459L579.4 464.8L581.9 464L588.5 454.8ZM525.3 497.7L531.2 502.3L535.7 498.4L532.6 491.8L528.6 490.8Z"/><path fill="#e9643c" d="M473.6 284L470.9 277.4L466.5 276.1L465.3 277L465.4 283.1L472.3 285.7Z"/><path fill="#f1a067" d="M533.5 262.1L529.3 267.5L529.9 269.5L541.8 268.5L540 261.8Z"/><path fill="#ddeece" d="M594.8 423.4L597.3 419.7L593.1 416L588.8 418.3L590.2 423.2Z"/><path fill="#dfeecc" d="M590.1 454.7L595.5 451.8L598.6 444L594.5 440.8L586.5 443L589.2 454.5ZM599.6 483.9L600.7 474.2L591.5 472.3L591.1 472.7L590.9 481.9L598.7 484.3Z"/><path fill="#dbeecf" d="M618.7 474.7L620 473L622 466.2L614.7 465.7L613.1 471.4ZM582.3 405.9L583.8 406L588 402.2L585.6 397.8L581.8 398.2L580 400.6L579.9 402.9Z"/><path fill="#bee9d5" d="M373.4 525.2L370.7 521.6L363.9 520.3L360 522.5L363.6 531L366.6 531.1Z"/><path fill="#e2eeca" d="M595.1 432.7L594.5 440.8L598.6 444L602.4 443.5L606.9 438.6L600.8 430.8L597.6 430.9ZM530.9 505.6L522.9 507.3L521.1 511L523.2 516.6L529.3 518.4L530 517L533 512.5L535.4 512.4ZM537.3 476.1L535.2 481.7L538.7 487.4L539.8 487.7L546.6 483.7L546.3 479.8L538.2 475.8ZM578.4 466.9L569.4 470.5L568.3 473.9L572 481.1L579.1 480.4L581.1 475.6ZM500.4 481.9L502.2 486.6L508.7 487.9L511.5 482L506.1 477.6Z"/><path fill="#b8e7d3" d="M358.1 578.4L365.3 576.5L365.9 574.8L364.3 567.6L360.6 566.3L355 567.8L355 576.5ZM358.6 608.2L360.2 601.1L358.5 599.7L350.5 601.5L352.1 609ZM353.9 591.9L354.3 587.3L349.4 584.6L348 586L349.4 594.9ZM373.6 512.8L376.9 512.6L380.4 503.3L379.6 502.7L370 502.8L370 503L369.5 503.4Z"/><path fill="#d1eed6" d="M560.6 474.6L557.7 478.3L558.6 484.2L570.5 483.3L572 481.1L568.3 473.9Z"/><path fill="#ade4d0" d="M363.6 548.6L364.4 541.8L359.8 535.4L357.3 535.8L355 543L355 546.9Z"/><path fill="#e8edc2" d="M529.2 344.9L535.3 346L540.3 341.5L536 333.1L536 333.1L527.3 339.1ZM561.9 419.8L557.8 414.8L554.1 414.3L551.1 425.2L561.8 425.3L562 425.2ZM561.1 387.6L565.4 388.7L571 385L572.2 380.5L567.5 375.1L562.8 374.6L561.3 376.2Z"/><path fill="#e5eec8" d="M602.4 454.8L607.4 451.9L602.4 443.5L598.6 444L595.5 451.8Z"/><path fill="#c1ead6" d="M376.2 491.7L369.1 497.1L370 502.8L379.6 502.7ZM360.1 557.3L363.1 554.3L363.9 549L363.6 548.6L355 546.9L355 556.7Z"/><path fill="#c2ead6" d="M365.1 513L373.4 512.9L373.6 512.8L369.5 503.4L362.4 509.7Z"/><path fill="#e8edc4" d="M560.6 445.7L553.6 442.7L546.3 447.7L547.1 453.1L557.9 451.7L560.7 446.5ZM563 407.1L566.8 403.9L564.3 398.5L558.4 398L554.9 401.9ZM562.9 410L557.8 414.8L561.9 419.8L566.8 417.2L567.5 412.7ZM582.3 346.9L575.6 351.2L581 360.2L583.4 360.6L587.9 357.2L586.2 348.9Z"/><path fill="#daeed0" d="M585.7 413.9L588.4 409.9L583.8 406L582.3 405.9L580.4 409.6L583.2 413.7Z"/><path fill="#d6eede" d="M364.3 588.2L364 586L367.8 582.6L365.3 576.5L358.1 578.4L358.1 585.6Z"/><path fill="#b7e7d3" d="M354.3 587.3L358.1 585.6L358.1 578.4L355 576.5L355 579L349.4 584.6Z"/><path fill="#b9e8d4" d="M370.3 484.9L367.2 484.8L368 490L369.1 497.1L376.2 491.7L376.5 490.9Z"/><path fill="#f2a86d" d="M548.8 248.3L548.8 248L542.3 243L538.5 245.6L540.7 255L542.8 256.6Z"/><path fill="#d4eed4" d="M603.7 485.6L599.6 483.9L598.7 484.3L594.7 492.6L597.5 497.6L606.1 491.4Z"/><path fill="#afe5d1" d="M360 522.5L363.9 520.3L365.1 513L362.4 509.7L362 510L360 520L359 522.2Z"/><path fill="#bbe8d4" d="M359.8 535.4L363.6 531L360 522.5L359 522.2L357 527L357.5 535L357.3 535.8Z"/><path fill="#f2a96e" d="M570.6 491.5L570.5 483.3L558.6 484.2L558.4 484.5L559.1 491.4L568.4 492.9Z"/><path fill="#dceecf" d="M595 462.5L601.5 463L602.4 454.8L595.5 451.8L590.1 454.7Z"/><path fill="#c6aae6" d="M476.2 266.5L479.3 266.3L482.1 263.1L479.8 258.9L472.8 259.6L472.3 261.5Z"/><path fill="#c7a9e7" d="M479.8 258.9L480.5 256.3L476.9 251.2L471.2 256L472.8 259.6Z"/><path fill="#d5eed3" d="M526.8 487.9L518.8 489.4L517.8 491.1L521.4 498.6L525.3 497.7L528.6 490.8Z"/><path fill="#d6eed2" d="M521.4 498.6L520.1 500.6L522.9 507.3L530.9 505.6L531.2 502.3L525.3 497.7Z"/><path fill="#f2ab6f" d="M551.4 257.7L552.8 255.5L548.8 248.3L542.8 256.6L543.3 257.7L545.8 259ZM503.5 471.2L496.5 471.7L495.3 474.4L498.9 481.6L500.4 481.9L506.1 477.6L506.3 473Z"/><path fill="#d9eed1" d="M572.6 414.1L576 411.4L572.3 405.9L568 412.6Z"/><path fill="#f19e66" d="M582.1 494.7L579.1 496.1L575.7 506L580 505L589 501.3Z"/><path fill="#bde9d5" d="M360.6 566.3L360.1 557.3L355 556.7L355 559L355 567.8Z"/><path fill="#c0ead6" d="M352.1 609L353 613L354.8 618.9L362.1 615.7L363.1 612.6L358.6 608.2Z"/><path fill="#e1eecb" d="M576.2 411.5L576 411.4L572.6 414.1L572.7 417.8L576.1 419.8L578.9 418.5L579.1 417.6Z"/><path fill="#d7edd2" d="M610.6 481.1L612.7 482.5L613 482L618.7 474.7L613.1 471.4L609.9 473.6Z"/><path fill="#d8eed1" d="M565.9 464.4L557.2 466.9L560.6 474.6L568.3 473.9L569.4 470.5Z"/><path fill="#f1a369" d="M515.8 481.7L518.8 489.4L526.8 487.9L527.6 483.6L525.3 479.9L516.6 480.7Z"/><path fill="#ea7145" d="M559.1 491.4L557.6 493.7L558.3 498L565.6 502.2L568.4 492.9Z"/><path fill="#ef945f" d="M510.5 493.3L510.4 493.4L513.3 502L520.1 500.6L521.4 498.6L517.8 491.1Z"/><path fill="#ace4d0" d="M362.4 633.6L362.9 627.9L356.9 625.8L357 626L356.3 635.2Z"/><path fill="#f19f67" d="M543.3 257.7L542.8 256.6L540.7 255L533.4 256.1L533.5 262.1L540 261.8Z"/><path fill="#d9eed0" d="M606.1 491.4L608 490L612.7 482.5L610.6 481.1L603.7 485.6Z"/><path fill="#f19f66" d="M552.6 504.7L558.3 498L557.6 493.7L549.5 493.6L547.1 495.9L550.4 503.8Z"/></g>
<g stroke="none"><path d="M505 325L512 322L521 324L528 329L524 334L516 335L509 332Z" fill="#55b8ea"/><path d="M485 300L493 301L495 306L488 307Z" fill="#55b8ea"/><path d="M465 311L473 310L475 318L468 320Z" fill="#8fd2ee"/><path d="M424 214L430 206L435 205L431 212L427 218L423 218Z" fill="#a5dcf0"/><path d="M437 224L446 223L447 227L439 227Z" fill="#a5dcf0"/><path d="M431 372L434 371L434 379L431 378Z" fill="#9ad6ee"/><path d="M599 327L603 326L604.5 333L602 338L599 337Z" fill="#ea5c8e"/><path d="M600 322L603 318L605 321L603 326Z" fill="#f3a6c0"/></g>
<g class="lbl"><text x="594" y="188.7" font-size="12" font-weight="bold" text-anchor="middle" fill="#2b2f33" class="hl">Paraguay</text>
<circle cx="373" cy="390" r="2.6" fill="#fff" stroke="#333" stroke-width="1"/><circle cx="373" cy="390" r="1.2" fill="#333"/>
<text x="376.5" y="393.9" font-size="11" font-weight="normal" text-anchor="start" fill="#3c4043" class="hl">Santiago</text>
<circle cx="406" cy="379" r="2.6" fill="#fff" stroke="#333" stroke-width="1"/><circle cx="406" cy="379" r="1.2" fill="#333"/>
<text x="409.5" y="382.3" font-size="9.5" font-weight="normal" text-anchor="start" fill="#3c4043" class="hl">Mendoza</text>
<circle cx="333" cy="463" r="1.9" fill="#fff" stroke="#555" stroke-width=".9"/>
<text x="336.5" y="466.3" font-size="9.5" font-weight="normal" text-anchor="start" fill="#3c4043" class="hl">Concepción</text>
<text x="386" y="560" font-size="8" text-anchor="middle" fill="#3c4043" class="hl">San Carlos</text><text x="386" y="568.5" font-size="8" text-anchor="middle" fill="#3c4043" class="hl">de Bariloche</text>
<text x="663" y="258.8" font-size="8.1" letter-spacing="1.1" text-anchor="middle" fill="#73858a" class="hl">MISIONES</text>
<text x="584" y="227.8" font-size="8.1" letter-spacing="1.1" text-anchor="middle" fill="#73858a" class="hl">FORMOSA</text>
<text x="600" y="291.8" font-size="8.1" letter-spacing="1.1" text-anchor="middle" fill="#73858a" class="hl">CORRIENTES</text>
<text x="437" y="261.8" font-size="8.1" letter-spacing="1.1" text-anchor="middle" fill="#73858a" class="hl">CATAMARCA</text>
<text x="502" y="280.3" font-size="8.1" letter-spacing="1.1" text-anchor="middle" fill="#73858a" class="hl">SANTIAGO</text>
<text x="502" y="291.3" font-size="8.1" letter-spacing="1.1" text-anchor="middle" fill="#73858a" class="hl">DEL ESTERO</text>
<text x="443" y="318.8" font-size="8.1" letter-spacing="1.1" text-anchor="middle" fill="#73858a" class="hl">LA RIOJA</text>
<text x="409" y="338.8" font-size="8.1" letter-spacing="1.1" text-anchor="middle" fill="#73858a" class="hl">SAN JUAN</text>
<text x="451" y="400.8" font-size="8.1" letter-spacing="1.1" text-anchor="middle" fill="#73858a" class="hl">SAN LUIS</text>
<text x="420" y="416.8" font-size="8.1" letter-spacing="1.1" text-anchor="middle" fill="#73858a" class="hl">MENDOZA</text>
<text x="554" y="324.8" font-size="8.1" letter-spacing="1.1" text-anchor="middle" fill="#73858a" class="hl">SANTA FE</text>
<text x="585" y="370.8" font-size="8.1" letter-spacing="1.1" text-anchor="middle" fill="#73858a" class="hl">ENTRE RÍOS</text>
<text x="474" y="489.8" font-size="8.1" letter-spacing="1.1" text-anchor="middle" fill="#73858a" class="hl">LA PAMPA</text>
<text x="394" y="509.8" font-size="8.1" letter-spacing="1.1" text-anchor="middle" fill="#73858a" class="hl">NEUQUÉN</text>
<text x="447" y="554.8" font-size="8.1" letter-spacing="1.1" text-anchor="middle" fill="#73858a" class="hl">RÍO NEGRO</text>
<text x="400" y="625.8" font-size="8.1" letter-spacing="1.1" text-anchor="middle" fill="#73858a" class="hl">CHUBUT</text>
<text x="567.5" y="465.3" font-size="8.1" letter-spacing="1.8" text-anchor="middle" fill="#73858a" class="hl">PROVINCIA</text>
<text x="567.5" y="474.3" font-size="8.1" letter-spacing="1.8" text-anchor="middle" fill="#73858a" class="hl">DE BUENOS</text>
<text x="567.5" y="483.3" font-size="8.1" letter-spacing="1.8" text-anchor="middle" fill="#73858a" class="hl">AIRES</text>
<text x="452" y="175.8" font-size="8.1" letter-spacing="1.1" text-anchor="middle" fill="#73858a" class="hl">JUJUY</text>
<text x="478" y="207.8" font-size="8.1" letter-spacing="1.1" text-anchor="middle" fill="#73858a" class="hl">SALTA</text>
<text x="556" y="260.8" font-size="8.1" letter-spacing="1.1" text-anchor="middle" fill="#73858a" class="hl">CHACO</text>
<text x="497" y="374.8" font-size="8.1" letter-spacing="1.1" text-anchor="middle" fill="#73858a" class="hl">CÓRDOBA</text>
<g clip-path="url(#baclip)"><text x="597" y="408.9" font-size="8.3" letter-spacing="1.3" text-anchor="middle" fill="#73858a" class="hl hl2">CIUDAD</text>
<text x="597" y="417.9" font-size="8.3" letter-spacing="1.3" text-anchor="middle" fill="#73858a" class="hl hl2">AUTÓNOMA DE</text>
<text x="597" y="426.9" font-size="8.3" letter-spacing="1.3" text-anchor="middle" fill="#73858a" class="hl hl2">BUENOS AIRES</text></g></g>
<path fill="none" stroke="#0f2018" stroke-width="1" d="M457.1 177.6L459.7 173.2M459.7 173.2L451.8 169M447.5 177.6L451.8 169M444.2 179.6L448.4 185.4M459 183.7L456 186M448.4 185.4L456 186M371.7 635.1L365 637.2M368.2 624.3L362.9 627.9M362.9 627.9L362.4 633.6M365 637.2L362.4 633.6M364.5 640L365 637.2M356.9 625.8L362.9 627.9M356.3 635.2L362.4 633.6M368.3 609.8L363.1 612.6M366.5 601.3L360.2 601.1M360.2 601.1L358.6 608.2M363.1 612.6L358.6 608.2M362.1 615.7L363.1 612.6M352.1 609L358.6 608.2M358.5 599.7L350.5 601.5M358.5 599.7L358.5 595.5M358.5 595.5L353.9 591.9M349.4 594.9L353.9 591.9M360.2 601.1L358.5 599.7M473 172.7L471.9 172.4M471.9 172.4L465.3 175.3M465.3 175.3L466.4 181.7M460.3 172.9L465.3 175.3M459.7 173.2L460.3 172.9M450.6 164.6L454.5 163M450.6 164.6L451.8 169M460.3 172.9L462.7 164.9M454.5 163L462.7 164.9M471.9 172.4L467.8 165.6M462.7 164.9L462.8 164.8M467.8 165.6L462.8 164.8M454.5 163L456.4 155.3M462.8 164.8L463.3 156.7M477.7 165.2L479 164.5M479 164.5L480.2 158.7M467.8 165.6L471.5 162.4M486.7 165L484 167.1M484 167.1L479 164.5M486.7 165L486.6 159.1M492.7 166.4L486.7 165M496.5 159.8L492.7 166.4M582.9 207.7L573.4 216.3M562.5 198.5L560.5 215.3M573.4 216.3L560.5 215.3M676.5 240.1L673.2 241.1M673.7 231.1L668.9 235.4M673.2 241.1L668.9 235.4M673.2 241.1L671.8 245.6M663.3 228.7L668 235.5M668.9 235.4L668 235.5M370.3 484.9L376.5 490.9M369.1 497.1L376.2 491.7M376.2 491.7L376.5 490.9M358.5 595.5L364.6 590.1M450.6 164.6L446 162.5M535.3 183.6L531.7 191.6M542.5 204.3L531.7 191.6M511.1 182.9L520.6 197.1M531.7 191.6L520.6 197.1M540.6 229.2L549.1 217.1M540.6 229.2L532.3 228.9M532.3 228.9L527.4 223.8M554.3 236.3L543.8 234.8M543.8 234.8L540.6 229.2M526.7 239.8L532.3 228.9M518.3 202L520.6 197.1M518.3 202L530.1 212.7M560.5 215.3L557.6 217.5M588.1 210.4L590.8 225.3M590.8 225.3L607 224.6M661.4 256.6L667.8 257.6M661.4 256.6L660.6 253.3M660.6 253.3L664.7 248.3M664.7 248.3L669.2 253.5M669.2 253.5L667.8 257.6M674 251.9L669.2 253.5M665 246L664.7 248.3M669.3 259.9L667.8 257.6M666 237.1L664.2 244.8M666 237.1L659.1 235.4M668 235.5L666 237.1M656.2 251.8L660.6 253.3M656.2 251.8L656 244M656.2 251.8L653.9 252.7M653.9 252.7L649.8 250.2M419.9 267.2L405.6 264.9M419.9 267.2L420 267.1M420 267.1L421.1 252.9M365.1 513L363.9 520.3M370.7 521.6L363.9 520.3M360 522.5L363.9 520.3M359 522.2L360 522.5M405.6 522.2L401.1 516.1M403.2 526L396.4 524.3M396.4 524.3L395.2 517.9M401.1 516.1L398.4 515.7M395.2 517.9L398.4 515.7M405.9 511.1L401.1 516.1M398.4 515.7L396.3 506.9M376.5 490.9L376.9 490.7M376.9 490.7L381.3 481.3M417 498.1L412.2 496.6M417 485.6L414.2 486.4M414.2 486.4L412.2 496.6M373.6 512.8L369.5 503.4M376.9 512.6L380.4 503.3M370 502.8L379.6 502.7M379.6 502.7L380.4 503.3M376.2 491.7L379.6 502.7M373.4 525.2L366.6 531.1M360 522.5L363.6 531M363.6 531L366.6 531.1M366.6 531.1L372.1 537.9M359.8 535.4L363.6 531M359.8 535.4L364.4 541.8M364.4 541.8L372.1 537.9M383.5 544.8L375.3 542.3M375.3 542.3L373.9 538.3M376.7 535.2L373.9 538.3M387.8 531.4L378.2 525.3M376.5 526L378.2 525.3M387.8 531.4L385.3 535.8M387.8 531.4L390.4 530.1M397.6 535.5L390.4 530.1M393.8 542.7L386.3 541.4M372.1 537.9L373.9 538.3M469.9 194.1L477.9 193.4M472.6 186.7L477.9 187M477.9 187L477.9 193.4M465 189.6L468.6 191.4M463 184.8L465 189.6M469 197.8L476.6 201.8M476.6 201.8L476.8 201.7M478.3 193.9L476.8 201.7M478.3 193.9L477.9 193.4M479.8 184.9L477.9 187M483.6 194.7L486.2 186.6M478.3 193.9L483.6 194.7M448.4 185.4L447.3 195.7M456 186L456.6 195.2M456.6 195.2L447.3 195.7M465 189.6L457.9 195.9M456.6 195.2L457.9 195.9M518.3 202L515 204.1M515 204.1L510.6 213.6M573.4 216.3L578.6 231.2M590.8 225.3L586.2 231.1M578.6 231.2L586.2 231.1M637.3 281.5L641.4 273.1M637.3 281.5L631.1 279.1M631.1 279.1L635.7 269.4M641.4 273.1L636 269.3M635.7 269.4L636 269.3M586.2 231.1L593.7 242.4M637.9 265.5L636 269.3M635.1 261.6L637.9 265.5M635.7 269.4L626.3 266M626.1 265.5L626.3 266M631.1 279.1L624.6 280M626.3 266L624.6 280M575.6 351.2L581 360.2M575.3 351.1L575.6 351.2M606.1 491.4L603.7 485.6M640.5 258L643.5 261M647.3 257.8L643.5 261M637.9 265.5L642.9 263.8M643.5 261L642.9 263.8M641.4 273.1L645.5 272.6M638.9 283.2L637.3 281.5M648.4 274.5L645.5 272.6M642.9 263.8L644.7 265.5M645.5 272.6L644.7 265.5M575.6 351.2L582.3 346.9M581.7 337L582.3 346.9M587.9 357.2L586.2 348.9M582.3 346.9L586.2 348.9M597.7 354.4L592.8 346M586.2 348.9L592.8 346M430.5 287.7L416.5 297.8M430.5 287.7L417.5 277.3M408.4 282.4L417.5 277.3M419.9 267.2L417.5 277.3M438.2 307.6L420.3 306.5M418.2 312.5L410.2 316.7M404.3 299L402.7 310M404.3 299L410.8 295.7M402.7 310L410.2 316.7M452.5 357.2L451.9 363M452.5 357.2L442.4 348.2M422.7 241.7L418.1 227.1M418.1 227.1L430.1 222.9M434.5 229.8L430.1 222.9M439.3 246.3L434.8 254.5M439.3 246.3L431.7 239.4M433.2 214.6L430.1 222.9M420.5 203.8L433.2 214.6M412.3 225.4L418.1 227.1M366.2 473.9L371.5 472.6M374.8 477.5L373.4 473.8M371.5 472.6L373.4 473.8M385.6 473.1L380 470.1M380.7 479.8L385.6 473.1M373.4 473.8L380 470.1M396.8 495.1L404.5 492.7M400.3 502.4L408.7 498.9M404.5 492.7L409.1 498.1M408.7 498.9L409.1 498.1M410.4 505.2L405.7 509.4M410.4 505.2L408.7 498.9M410.4 505.2L417 507.9M412.2 496.6L409.1 498.1M390.7 529.1L387.6 520.8M396.4 524.3L390.7 529.1M395.2 517.9L391.5 517.2M391.5 517.2L387.6 520.8M390.7 529.1L390.4 530.1M378.2 525.3L381.7 519.9M387.6 520.8L381.7 519.9M380.5 515.2L381.7 519.9M395.1 506.9L388.5 500.8M383.9 503L387 511.2M383.9 503L387 500.7M388.5 500.8L387 500.7M391.5 517.2L389.2 511.8M396.2 494.7L388.5 500.8M380.4 503.3L383.9 503M376.9 490.7L384.7 491.8M384.7 491.8L387 500.7M384.7 491.8L388.7 488.7M394.2 490.1L388.7 488.7M385.6 473.1L386.7 472.9M386.7 472.9L391.1 479M388.7 488.7L387.6 483.9M359.8 535.4L357.3 535.8M364.4 541.8L363.6 548.6M363.6 548.6L355 546.9M367.8 582.6L365.3 576.5M365.3 576.5L358.1 578.4M358.1 578.4L358.1 585.6M353.9 591.9L354.3 587.3M365.3 576.5L365.9 574.8M365.9 574.8L372 574.3M383.6 547.4L377.7 552.5M492.7 166.4L494 173.5M484 167.1L484.5 171.6M494 173.5L484.5 171.6M475.1 171.6L482.7 173.6M479 181L482.6 177.2M482.6 177.2L482.7 173.6M482.7 173.6L484.5 171.6M445.5 244.6L439.3 246.3M445.5 244.6L447.2 238.5M447.2 238.5L444.2 231.3M476.8 201.7L482.7 202.7M483.6 194.7L487.3 198.7M487.3 198.7L482.7 202.7M530.3 246.3L538.5 245.6M543.8 234.8L542.3 243M538.5 245.6L542.3 243M624.6 280L624.1 280.4M625.4 291.1L615.5 296M619.1 305.8L615.5 296M612.3 279.8L609.3 293.8M609.3 293.8L615.5 296M561.5 245.2L557.5 254.6M548.8 248.3L552.8 255.5M552.8 255.5L557.5 254.6M542.3 243L548.8 248M580.8 268.8L588.7 262.1M583.4 251.1L588.3 259.8M580.8 268.8L571.8 260.2M582.2 250.9L571.8 260.2M599.1 275.8L590.9 262.2M599.1 275.8L606 263.6M599.1 276.1L599.1 275.8M486.2 317.6L477.9 310.1M473 312.6L477.9 310.1M473 312.6L472.6 324M446.1 245.1L458.2 244.4M446.1 245.1L448.8 250M448.8 250L458.9 252.7M458.2 244.4L460.8 247.4M460.8 247.4L459.8 252.3M459.8 252.3L458.9 252.7M430.5 287.7L432.8 287.5M445.5 244.6L446.1 245.1M448.8 250L448.2 260.1M439.5 265.9L448.2 260.1M458.9 252.7L454.6 261M448.2 260.1L454.6 261M514.4 239.4L510.1 253.7M510.1 253.7L499.4 247.8M499.4 247.8L497.6 241.9M487.9 256.2L492.7 256.5M487.9 256.2L485.9 263.3M495.8 261.2L488 265M488 265L485.9 263.3M582.9 374.7L573.8 368.4M587.2 370.4L597.1 368.2M660.4 263.9L659.7 259.8M660.4 263.9L653 266.2M659.7 259.8L651.9 258.5M651.9 258.5L651.7 258.6M662.3 265.8L660.4 263.9M661.4 256.6L659.7 259.8M653.9 252.7L651.9 258.5M644.7 265.5L651.8 264.9M522.9 507.3L520.1 500.6M521.1 511L522.9 507.3M474 504.1L479.9 500.7M474 492.7L474.4 492.7M474.4 492.7L479.9 500.7M537.3 476.1L538.2 475.8M546.3 479.8L538.2 475.8M589.6 336.7L583.3 335.5M589.6 336.7L597.7 330M595.3 321.6L597.7 330M593.8 343.1L589.6 336.7M592.8 346L593.8 343.1M600.4 341.9L593.8 343.1M601.7 332.6L597.7 330M404.3 299L389.6 295.1M402.7 310L391 315.3M391 315.3L386.8 314M410.2 316.7L408.2 324.5M391 315.3L399.4 327M443 313.4L454.5 309.3M454.5 309.3L461 315.3M442.3 346.4L457.7 343M457.7 343L454.8 336.1M454.8 336.1L441.4 333.3M441.4 333.3L439.3 334.9M422.8 356.8L424.7 359.3M422.8 356.8L425.8 344.2M425.8 344.2L438.5 339.3M461.1 351L459.8 344.3M461.1 351L452.5 357.2M459.8 344.3L457.7 343M458.7 329.6L454.8 336.1M449.6 322.5L458.7 329.6M447.5 322.3L441.4 333.3M416.4 335.7L416.7 332.4M425.8 344.2L416.4 335.7M380 470.1L379.3 461.6M387.5 471.8L386.7 472.9M387.5 471.8L387.3 462.4M387.3 462.4L379.3 461.6M497 515.6L502.5 512.3M502.5 512.3L508.8 516.6M519.3 519.4L509 517.2M518.5 524.7L519.3 519.4M519.3 519.4L523.2 516.6M387.5 471.8L397.4 469.3M365.9 574.8L364.3 567.6M372 563.3L371.4 563.1M364.3 567.6L371.4 563.1M488.5 185.9L490 180.9M490 180.9L495.7 175.6M495.7 175.6L502.4 176.7M502.4 176.7L505.9 181.8M487.3 198.7L494.8 199.3M482.6 177.2L490 180.9M494 173.5L495.7 175.6M515 204.1L497.5 196.4M507.6 161.9L502.4 176.7M463.2 200.9L461.9 209.1M470.2 207.4L464.5 210.7M464.5 210.7L461.9 209.1M457.9 195.9L459.6 199.2M474.7 206.3L476.6 201.8M474.7 206.3L471.5 207.8M465.9 217.6L468.5 218.8M465.9 217.6L464.5 210.7M465.9 217.6L461 218.5M461 218.5L456.7 214.1M461.9 209.1L457 210.3M456.7 214.1L457 210.3M465.8 245.2L467.4 240.2M469.1 248.3L465.8 245.2M609.3 293.8L603.8 296.4M600 294.5L592.6 295.2M592.6 295.2L587.9 290.4M589.8 279.4L587.9 290.4M577 245.7L578.1 231.6M568.9 233.4L578.1 231.6M568.9 233.4L563.4 245.1M571.8 260.2L569.5 260M578.6 231.2L578.1 231.6M560.3 227.3L568.9 233.4M557.5 254.6L562.2 261M565.5 262.6L562.2 261M512.2 273.8L516.6 258.9M499.7 262.5L510.2 253.9M510.2 253.9L516.5 258.7M488.7 269.7L488 265M488.7 269.7L499.7 270.3M510.1 253.7L510.2 253.9M499.4 247.8L495.2 250M502.6 279.2L508.4 291.7M498.7 280.5L493.2 290.8M500.6 299.7L493.2 290.8M494.6 279.9L487.5 284.1M487.5 284.1L487 287.3M487 287.3L490.8 290.8M493.2 290.8L490.8 290.8M420 267.1L435.9 269.7M434.4 285.5L435.9 269.7M435.9 269.7L439.4 266.4M455.3 261.8L456.3 268.9M454.6 261L455.3 261.8M488.7 269.7L487.1 272.7M487.7 274.7L487.1 272.7M487.5 284.1L483.2 280.4M485.9 263.3L482.1 263.1M479.3 266.3L482.1 263.1M479.3 266.3L481.7 271.9M487.1 272.7L481.7 271.9M572.2 380.5L579.9 379.2M591.5 381.1L584.9 374M591.5 381.1L588.1 387M573.9 387.6L579.3 387.1M581.5 384.6L579.3 387.1M579.3 387.1L579.5 392.7M591 389.7L596.7 388.4M591.5 381.1L597.5 380.8M618.7 474.7L613.1 471.4M614.7 465.7L613.1 471.4M610.6 481.1L609.9 473.6M613.1 471.4L609.9 473.6M560.6 445.7L560.7 446.5M547.1 453.1L557.9 451.7M557.9 451.7L560.7 446.5M538.2 475.8L543.1 468.1M549.6 470.7L544.8 467.8M543.1 468.1L544.8 467.8M544.8 467.8L548.1 458.3M555 461.7L559.4 456.9M559.4 456.9L557.9 451.7M539.8 487.7L543.3 495.6M539.3 498.7L543.3 495.6M539.3 498.7L535.7 498.4M474.4 492.7L477.1 490.6M477.5 483.3L477.1 490.6M387.3 462.4L388.8 461.5M542 438.6L551.8 435.2M546.3 447.7L541 442.8M542 438.6L540.8 440.2M579.1 496.1L575.7 506M539.3 498.7L542.1 507.8M542.1 507.8L539.8 512.3M522.9 507.3L530.9 505.6M557.6 493.7L549.5 493.6M549.5 493.6L547.1 495.9M547.1 495.9L550.4 503.8M552.6 504.7L550.4 503.8M567.7 507.9L565.6 502.2M565.6 502.2L558.3 498M549 485.7L549.5 493.6M543.3 495.6L547.1 495.9M542.1 507.8L550.4 503.8M575.5 447L567.7 451.3M567.7 451.3L567.6 458.8M559.4 456.9L567 459.2M560.7 446.5L567.7 451.3M558.4 484.5L558.6 484.2M558.6 484.2L570.5 483.3M550.1 475.6L557.7 478.3M557.7 478.3L558.6 484.2M565.6 502.2L568.4 492.9M475.2 472.7L479.6 465.5M474 472.9L475.2 472.7M475.8 460.5L479.6 465.5M573.4 323.5L573.6 317.8M573.4 323.5L582.6 327.1M416.4 335.7L406 345.2M396.5 333L406 345.2M406.8 361.9L411.6 354.3M394.9 363L393.4 352.2M411.6 354.3L405.9 346.1M393.4 352.2L405.9 346.1M422.8 356.8L411.6 354.3M405.9 346.1L406 345.2M573.4 323.5L567.5 327.5M562.2 312.2L562 324.5M562 324.5L567.5 327.5M572.2 337.8L567.8 333.2M567.8 333.2L567.5 327.5M495.7 313.6L502.6 319.5M502.6 319.5L495 330.2M465.2 325L461.8 329M461.8 329L467.3 338.5M471.9 324.7L475.3 335.3M475.3 335.3L471.6 338.4M467.3 338.5L471.6 338.4M458.7 329.6L461.8 329M473 312.6L466.5 311.1M459.8 344.3L467.3 338.5M486.1 327.2L480.9 335.5M480.9 335.5L475.3 335.3M478.3 351L474.5 349.1M474.5 349.1L471.6 338.4M480.9 335.5L484.4 339.7M464.1 352.6L474.5 349.1M461.1 351L464.1 352.6M379 460.8L379.2 461.5M379 460.8L370.5 452.7M379.2 461.5L371.3 465.5M371.3 465.5L367.1 462.8M371.5 472.6L371.3 465.5M379.3 461.6L379.2 461.5M405.2 489.1L413.8 486.3M405.2 489.1L400.5 483.6M400.5 483.6L407.7 479.6M413.8 486.3L407.7 479.6M414.2 486.4L413.8 486.3M404.5 492.7L405.2 489.1M399.3 483.4L400.5 483.6M408.4 475.1L407.7 479.6M360.6 566.3L360.1 557.3M360.6 566.3L355 567.8M364.3 567.6L360.6 566.3M358.1 578.4L355 576.5M371.6 549.2L363.9 549M371.6 549.2L373.8 551.8M363.9 549L363.1 554.3M371.4 563.1L371 561.6M363.6 548.6L363.9 549M375.3 542.3L371.6 549.2M465.8 245.2L460.8 247.4M458.2 244.4L458.7 239.8M458.7 239.8L465.1 236.3M447.2 238.5L453.7 236.4M458.7 239.8L453.7 236.4M482.7 202.7L483.3 208.1M494.2 209.7L483.3 208.1M474.7 206.3L480.6 211.1M480.6 211.1L483.3 208.1M480.6 211.1L480.4 214.1M454.3 205.5L454.5 207.8M454.5 207.8L442 214M457 210.3L454.5 207.8M447.3 195.7L443.8 198.8M448.8 218.6L446.9 218.7M456.7 214.1L448.8 218.6M433.2 214.6L439 212.6M479.8 258.9L482.1 263.1M479.8 258.9L480.5 256.3M487.9 256.2L486 254.1M480.5 256.3L486 254.1M538.5 245.6L540.7 255M528.7 250.7L533.4 256.1M539.4 294L546.9 290.5M539.4 294L539.9 302M539.9 302L546.8 304.8M552.2 295.9L547.1 304.7M552.2 295.9L546.9 290.5M529.1 306.9L539.9 302M560.1 298.4L555.5 295.6M555.5 295.6L552.2 295.9M555.8 280L546.8 285.8M546.8 285.8L546.9 290.5M555.5 295.6L560.8 282.8M529.5 274.5L539.7 280.2M539.7 280.2L532.9 290.7M532.9 290.7L525.8 291.9M546.8 285.8L539.9 280.2M539.9 280.2L539.7 280.2M539.4 294L532.9 290.7M533.5 262.1L540 261.8M541.8 268.5L540 261.8M542.8 256.6L543.3 257.7M543.3 257.7L540 261.8M539.9 280.2L544.2 273.8M612.7 313.3L603.8 305.8M590.4 307.9L582.2 313M590.4 307.9L595.4 310.7M592.6 295.2L588.6 301.9M590.4 307.9L588.6 301.9M567.1 285.5L576.4 283.4M576.4 283.4L580.5 275.4M554.7 271.9L553.9 274.1M564.4 267.1L554.7 271.9M580.8 268.8L580.2 274.7M580 291.2L576.4 283.4M587.9 290.4L580 291.2M495.6 304.8L493.5 304.1M490.8 290.8L487.1 295.5M487.1 295.5L493.5 304.1M450.4 275.5L458.1 278.6M458.8 269.9L460.3 276.8M458.1 278.6L460.3 276.8M465.9 265.5L472.3 261.5M471.2 256L468.3 254.7M471.2 256L472.8 259.6M472.8 259.6L472.3 261.5M455.3 261.8L463.5 262M459.8 252.3L464.7 255.5M476.9 251.2L477 250.3M474.1 247.3L477 250.3M476.9 251.2L471.2 256M476.9 251.2L480.5 256.3M479.8 258.9L472.8 259.6M479.3 266.3L476.2 266.5M476.2 266.5L472.3 261.5M465.3 277L460.3 276.8M465.3 277L466.5 276.1M476.2 266.5L473.5 270M466.8 268.8L473.5 270M570 345.3L561.7 347.4M561.7 347.4L561.3 356.6M565.4 388.7L567.2 392.5M574.8 393.2L574.8 393.2M574.8 393.2L567.2 392.5M585 390.9L587.3 396M581.8 398.2L585.6 397.8M585.6 397.8L587.3 396M591.6 395.4L591.9 395.1M591.6 395.4L587.3 396M592 409.4L588.4 409.9M591.6 395.4L591.9 402.6M585.6 397.8L588 402.2M594.5 440.8L598.6 444M602.4 443.5L598.6 444M606.9 438.6L602.4 443.5M588.8 418.3L590.2 423.2M597.6 430.9L594.8 423.4M614.4 464.8L619.6 456.9M610.4 461.7L609.7 452.4M619.6 456.9L612.8 451M622.7 456.4L619.6 456.9M607.4 451.9L602.4 443.5M609.9 473.6L603.2 472.4M584.8 490.2L594.7 492.6M594.7 492.6L598.7 484.3M597.5 497.6L594.7 492.6M591.1 472.7L591.5 472.3M591.1 472.7L590.9 481.9M521.4 498.6L517.8 491.1M525.3 497.7L528.6 490.8M518.8 489.4L526.8 487.9M526.8 487.9L528.6 490.8M532.6 491.8L528.6 490.8M535.2 481.7L527.6 483.6M527.6 483.6L526.8 487.9M482.8 500.9L484 500M482.8 500.9L483.6 508.3M484 500L490.6 502.8M479.9 500.7L482.8 500.9M477.1 490.6L482.2 491.1M484 500L484.4 498.9M482.2 491.1L484.4 498.9M557.7 478.3L560.6 474.6M557.2 466.9L560.6 474.6M578.4 466.9L569.4 470.5M579.4 464.8L574.8 459M560.6 474.6L568.3 473.9M584.6 485.9L579.1 480.4M591.1 472.7L581.1 475.6M543.1 468.1L535.8 462.6M577.9 294.9L568.4 295M577.9 294.9L579.9 301M579.9 301L577 305.4M566.7 297.2L570.8 305.7M570.8 305.7L577 305.4M580 291.2L577.9 294.9M588.6 301.9L579.9 301M580.7 312.6L577 305.4M566.6 311.4L570.8 305.7M386.4 336.1L380.6 334.1M393.4 352.2L391 350.9M551.6 332.2L559.5 338.1M551.6 332.2L546 342.9M548.3 346.6L559.3 345.1M559.3 345.1L559.5 338.1M547 354.2L536.7 353.3M536.7 353.3L535.3 346M540.3 341.5L535.3 346M561.7 347.4L559.3 345.1M567.8 333.2L559.5 338.1M542.5 318.3L550.5 318.7M541.3 320.1L541.8 328.6M550.5 318.7L555 326M541.8 328.6L551.5 332M555 326L551.5 332M555.5 311.2L550.5 318.7M562 324.5L555 326M536 333.1L541.8 328.6M551.6 332.2L551.5 332M528.2 367.8L534.3 366.7M528.2 367.8L524.7 361.5M524.7 361.5L531.3 356.4M536.4 363.7L533.3 356.6M533.3 356.6L531.3 356.4M525.2 373.2L528.2 367.8M515.5 368.7L520.4 360.4M520.4 360.4L524.7 361.5M536.7 353.3L533.3 356.6M535.3 346L529.2 344.9M529.2 344.9L525.5 349.6M525.5 349.6L531.3 356.4M448.8 218.6L457.4 223.5M453.7 228.3L457.4 223.5M453.7 236.4L456.1 232.5M461 218.5L458 223.4M458 223.4L457.4 223.5M480.1 223.6L481.1 224.1M480.1 223.6L475.6 225.3M481.1 224.1L483.3 230M475.6 225.3L472.9 230.7M472.9 230.7L475.9 233.5M475.9 233.5L481.2 233M483.3 230L481.2 233M468.9 218.7L475.6 225.3M478.6 215.9L480.1 223.6M486.5 221.8L492.2 224.9M486.5 221.8L486.8 216.1M495.5 224.4L492.2 224.9M495.5 224.4L497 213.8M487.3 230.1L483.3 230M481.1 224.1L486.5 221.8M487.3 230.1L492.2 224.9M501.5 231L490 234.5M490 234.5L487.3 230.1M501.5 231L495.5 224.4M502.3 231.5L501.5 231M480.4 241.7L484 238.9M484 238.9L488.3 239.7M488.3 239.7L488.9 240.5M486 254.1L486.3 249.1M477 250.3L481.7 247.7M474.7 240.8L475.9 233.5M481.2 233L484 238.9M490 234.5L488.3 239.7M553.9 262.6L552.3 266.5M553.9 262.6L551.4 257.7M552.3 266.5L547.3 265.2M547.3 265.2L545.8 259M551.4 257.7L545.8 259M562.2 261L553.9 262.6M554.7 271.9L552.3 266.5M552.8 255.5L551.4 257.7M542.6 269L547.3 265.2M543.3 257.7L545.8 259M457.5 284.9L451.8 293M457.5 284.9L448.1 282.4M451.8 293L445.9 284.3M458.1 278.6L458 284.8M458 284.8L457.5 284.9M448.1 298.4L451.9 294M448.1 298.4L455.6 304.8M451.9 294L458.8 295.5M458.8 295.5L459.2 303M455.6 304.8L459.2 303M439.8 301L448.1 298.4M451.8 293L451.9 294M454.5 309.3L455.6 304.8M462.5 293.5L468.3 299.6M464.8 304.7L459.2 303M462.5 293.5L458.8 295.5M481.7 295.7L481.6 304.6M481.7 295.7L480.2 294.1M480.2 294.1L474.7 293.7M478.5 307.6L481.6 304.6M478.5 307.6L471.2 298.9M487.1 295.5L481.7 295.7M493.5 304.1L481.6 304.6M487 287.3L482.2 289M482.2 289L480.2 294.1M477.9 310.1L478.5 307.6M470.9 277.4L474.8 273.8M478.2 274.9L479.8 280.9M478.2 274.9L474.8 273.8M473.5 270L474.8 273.8M481.7 271.9L478.2 274.9M482.2 289L478.4 282.7M546 369.3L542.1 363.6M546 369.3L539.3 375.7M564.3 398.5L567 395.4M567 395.4L567.2 392.5M538.2 388.7L548.5 384.4M539.3 394.9L538.2 388.7M548.8 369.6L552.1 366.7M548.8 369.6L552.3 377.2M552.1 366.7L560.9 368.6M552.3 377.2L561.3 376.2M560.9 368.6L562.8 374.6M562.8 374.6L561.3 376.2M546 369.3L548.8 369.6M552.4 357.8L552.1 366.7M548.5 383L552.3 377.2M564.4 359.5L560.9 368.6M558.5 389L551 387.6M561.1 387.6L561.3 376.2M567.5 375.1L562.8 374.6M566.8 403.9L563 407.1M563 407.1L554.9 401.9M541.5 402.5L550.6 405.7M541.5 402.5L540.5 395.9M563 407.1L562.9 410M554.1 414.3L557.8 414.8M557.8 414.8L562.9 410M567 395.4L572.1 398.9M570.6 404.1L572.1 398.9M574.8 393.2L574.2 397.5M572.1 398.9L574.2 397.5M574.2 397.5L580 400.6M582.4 426.8L585.6 434.1M585.6 434.1L591.4 431.8M587.4 417.7L582.3 421M598.6 444L595.5 451.8M475.2 472.7L480.2 474.8M482.1 481.5L480.2 474.8M484.4 498.9L491.4 493.2M464.1 352.6L468.9 365M438.7 368.1L448.2 379.4M448.2 379.4L460.1 371.9M460.3 370.7L460.1 371.9M484.3 466.2L479.6 465.5M484.3 466.2L487.6 459.8M474 448.2L476.4 448M479.4 456.7L476.4 448M531.5 472.1L531.3 467M527.6 483.6L525.3 479.9M525.3 479.9L526.3 475.2M498.8 372.6L500.7 361.8M489.4 361.7L488.4 371M489.4 361.7L494 357.8M488.4 371L490.9 374.3M494 357.8L500.7 361.8M506.2 361.2L500.7 361.8M477.1 371L488.4 371M478.5 359L489.4 361.7M493.8 352.7L482.4 348.6M493.8 352.7L494 357.8M503.9 375.5L499.1 388.5M499.1 388.5L498.4 388.6M498.4 388.6L490.1 378.8M511.3 377L510.7 385.1M499.1 388.5L501 389.2M510.7 385.1L501 389.2M529.2 344.9L527.3 339.1M536 333.1L527.3 339.1M525.7 306.9L522.2 310.3M505.7 298L516.7 309.6M522.2 310.3L516.7 309.6M527.9 321.2L523.5 315.6M522.2 310.3L523.5 315.6M502.6 319.5L502.7 319.6M516.7 309.6L502.7 319.6M520.4 360.4L517.3 354.4M525.5 349.6L520 350.5M517.3 354.4L520 350.5M517.3 354.4L510.4 354.7M461.9 231.6L462.3 227.8M466.8 225.2L462.3 227.8M472.9 230.7L472.3 230.7M458 223.4L462.3 227.8M460.8 286.1L465.4 283.1M460.8 286.1L463.2 291.4M463.2 291.4L471.9 288.7M465.4 283.1L472.3 285.7M465.3 277L465.4 283.1M458 284.8L460.8 286.1M462.5 293.5L463.2 291.4M549.6 426.3L541.6 430.2M541.6 430.2L534.3 426.2M542 438.6L541.6 430.2M541.9 414.8L550.1 410.6M541.9 414.8L541.8 418.8M541.5 402.5L534.7 408.5M541.9 414.8L535 410.3M510.7 385.1L514.9 388.7M531.8 424.9L523 425.5M523 425.5L518.6 430.1M530.2 387.3L535.5 386.8M530.2 387.3L525.7 377.2M535.5 386.8L537.3 376.4M525.7 377.2L526 376.5M526.7 390.8L526.5 392.7M530.8 399.2L526.5 392.7M538.2 388.7L535.5 386.8M526.7 390.8L530.2 387.3M526.7 390.8L519.5 386.5M520.5 380.3L525.7 377.2M590.9 469.2L595 462.5M595 462.5L590.1 454.7M601.5 463L595 462.5M577.8 452.1L588.5 454.8M484.3 466.2L486.1 469.6M480.2 474.8L485.9 470.9M486.1 469.6L485.9 470.9M497 500.2L502.4 495.9M497 500.2L499.2 506.3M506.3 504.2L501.5 507.4M506.3 504.2L502.8 496M501.5 507.4L499.2 506.3M495.3 499.8L497 500.2M492 509.5L499.2 506.3M511.5 504.8L506.3 504.2M502.5 512.3L501.5 507.4M508.7 487.9L502.2 486.6M502.2 486.6L500 491.8M510.5 493.3L508.7 487.9M494 484L488 481.7M485.6 482.9L488 481.7M498.9 481.6L500.4 481.9M502.2 486.6L500.4 481.9M482.2 491.1L485.5 487.7M489.6 476.4L495.3 474.4M489.6 476.4L488 481.7M489.6 476.4L485.9 470.9M512.7 466.3L507.8 460.9M520.6 457.8L512.7 466.3M521.5 457.6L522.3 456.6M522.3 456.6L534.5 455.8M509.2 455.4L502.8 452M502.8 452L503.7 447.8M503.7 447.8L510.2 443.7M492.6 430.9L499.6 432M499.6 432L498.8 440.8M502.8 452L498 454M497 453.8L498 454M503.7 447.8L498.2 441.6M508.9 439.4L509.8 435.4M499.6 432L502.7 430.1M509.8 435.4L502.7 430.1M379 460.8L382.6 453M460.1 371.9L464.3 381.2M464.3 381.2L475.7 380.7M527.3 339.1L524.5 337.9M522.8 331.9L524.5 337.9M523.5 315.6L513.5 329.3M520 350.5L517 341.8M524.5 337.9L517 341.8M493.8 352.7L495.8 349.8M505.7 347.5L495.8 349.8M495.8 349.8L493.3 339.7M523 425.5L521.5 417.2M529.9 415.2L523.7 415M521.5 417.2L523.7 415M557.8 414.8L561.9 419.8M562.9 410L567.5 412.7M585.6 434.1L582.8 438.9M576 411.4L572.3 405.9M576 411.4L572.6 414.1M566.8 417.2L569.6 418.9M572.7 417.8L569.6 418.9M576.2 411.5L580.4 409.6M576.2 411.5L579.1 417.6M580.4 409.6L583.2 413.7M582.3 405.9L580.4 409.6M576 411.4L576.2 411.5M496.5 471.7L494.1 467.7M494.6 465.1L494.1 467.7M486.1 469.6L494.1 467.7M498 454L501.5 462.3M511.5 482L506.1 477.6M511.5 482L515.8 481.7M506.1 477.6L506.3 473M512.7 466.3L512.8 469.2M525.3 479.9L516.6 480.7M508.7 487.9L511.5 482M500.4 481.9L506.1 477.6M522.2 451.1L527.7 444.9M522.2 451.1L515.6 445.6M519.8 440.4L527 442.3M527 442.3L527.7 444.9M522.3 456.6L522.2 451.1M533.9 448.3L527.7 444.9M509.8 435.4L517 431.8M530 436.3L527 442.3M486.9 450.3L477.5 447.1M486.9 450.3L488.5 449.1M488.5 449.1L486.4 440.8M477.5 447.1L479.5 441.7M479.5 441.7L483 439.2M483 439.2L486.4 440.8M485 456.6L486.9 450.3M476.4 448L477.5 447.1M493.6 449.5L488.5 449.1M491.4 439.3L486.4 440.8M496.1 418.5L499 406.3M498.6 405.6L499 406.3M502.7 430.1L504 421.9M506.6 396.4L501 389.2M498.4 388.6L493.2 393.6M483 439.2L482.6 434.2M482.6 434.2L487.6 427.2M503.3 336.9L511.1 329.5M511.1 329.5L512.2 329.8M517 341.8L515.6 341.2M502.7 319.6L511.1 329.5M521.5 417.2L515.5 417.1M499 406.3L507.7 409.6M504.5 421.6L507.7 409.6M510.6 397.4L514.1 395.6M526.5 392.7L518.6 397.4M507.7 409.6L511.2 408.4M523.7 415L521 406.5M576.1 419.8L574.4 424.6M569.6 418.9L569.5 425.5M569.5 425.5L574.4 424.6M578.1 428L574.4 424.6M479.5 441.7L471.1 436.7M482.6 434.2L476.3 432M561.8 425.3L560.1 433.8M560.1 433.8L565.2 439M570.4 434.6L567.7 438.5M569.5 425.5L568.2 426.5M552.1 434.6L560.1 433.8M485.4 412.6L478.8 414.3M478.8 414.3L476.7 422.3M471.4 403.7L482 401.2M482 401.2L484.4 392.6M469.8 406.4L478.8 414.3M487.4 406.6L482 401.2M464.3 381.2L461.5 388.7M461.5 388.7L470.8 394.6M457 391L456.5 398.6M457 391L447.1 386.9M456.5 398.6L448.7 404.6M447.1 386.9L440.7 390.2M466.7 407.7L456.5 398.6M461.5 388.7L457 391M448.2 379.4L447.1 386.9M451.4 413.2L446.4 418.7M461.6 429.3L464.7 424M461.6 429.3L454.7 432.1M454.7 432.1L447.7 430.5M468.9 437L461.6 429.3M457.1 445L454.7 432.1M421.7 533L421.7 581M443 533L443 581M462.5 533L462.5 581M422 532.7L472 532.7M472 526L472 551M390 534L391 548L407 543L417 538L422 533M367 574L393 573L397 581M396 581L396 640M415 581L415 603M415 602.7L475 602.7M459 581L459 603M426.7 603L426.7 640M437.5 603L437.5 614M396 614L425 614M437 614L467 614M466.7 603L466.7 626M437.5 445L437.5 493M457.5 445L457.5 482M437 481.7L474 481.7M464 482L464 506M388 420L400 427L413 435L417 445M387 387L395 383L407 378L413 370L420 363M413 382L428 383L437 387M417 390L418 403L428 405L430 387M388 408L400 410L413 405L428 405L443 410M385 417L395 423L407 430M392 390L398 386L403 392L397 397L392 390M472 531L503 531M480 531L480 544M504 540L515 537L525 540"/><path fill="none" stroke="#060d09" stroke-width="2.2" stroke-linecap="round" stroke-linejoin="round" d="M457.1 177.6L447.5 177.6M444.2 179.6L447.5 177.6M459 183.7L457.1 177.6M370.8 624.4L368.2 624.3M362.1 615.7L368.2 624.3M354.8 618.9L362.1 615.7M474.1 178.3L470.3 181.8M474.1 178.3L473 172.7M466.4 181.7L470.3 181.8M463 184.8L459 183.7M463 184.8L466.4 181.7M477.7 165.2L471.5 162.4M471.5 162.4L471.9 158.1M475.1 171.6L473 172.7M475.1 171.6L477.7 165.2M675.1 248.7L671.8 245.6M367.2 484.8L370.3 484.9M444.2 179.6L438.3 178.3M553.5 195.2L542.5 204.3M511.1 182.9L523.7 172.5M527.4 223.8L530.1 212.7M530.1 212.7L542.3 209M549.1 217.1L542.3 209M560.3 227.3L557.6 217.5M554.3 236.3L560.3 227.3M557.6 217.5L549.1 217.1M514.4 239.4L526.7 239.8M514.4 239.4L510 230.8M510 230.8L513.8 224.1M513.8 224.1L527.4 223.8M542.5 204.3L542.3 209M671.8 245.6L665 246M664.2 244.8L656.8 243.2M665 246L664.2 244.8M413 248.3L418.2 248.7M418.2 248.7L421.1 252.9M373.4 512.9L365.1 513M373.4 512.9L370.7 521.6M362.4 509.7L365.1 513M405.9 511.1L405.7 509.4M405.7 509.4L399.5 504.9M399.5 504.9L396.3 506.9M370.3 484.9L374.8 477.5M374.8 477.5L380.7 479.8M381.3 481.3L380.7 479.8M373.6 512.8L376.9 512.6M373.4 512.9L373.6 512.8M373.4 525.2L370.7 521.6M385.3 535.8L376.7 535.2M385.3 535.8L386.3 541.4M386.3 541.4L383.5 544.8M376.5 526L376.7 535.2M373.4 525.2L376.5 526M468.6 191.4L469.9 194.1M468.6 191.4L472.6 186.7M470.3 181.8L472.6 186.7M469 197.8L469.9 194.1M474.1 178.3L479 181M479 181L479.8 184.9M479.8 184.9L486.2 186.6M513.8 224.1L510.6 213.6M593.7 242.4L596.7 243.2M575.3 351.1L566.2 359.6M566.2 359.6L573.7 365.1M573.7 365.1L581 360.2M612.7 482.5L610.6 481.1M610.6 481.1L603.7 485.6M645.9 253.5L647.3 257.8M570 345.3L575.3 351.1M572.2 337.8L570 345.3M572.2 337.8L581.7 337M587.9 357.2L583.4 360.6M583.4 360.6L581 360.2M597.4 358L587.9 357.2M408.4 282.4L410.8 295.7M410.8 295.7L416.5 297.8M398.8 276.6L408.4 282.4M439.2 310.5L438.2 307.6M439.2 310.5L427.4 324.2M427.4 324.2L418.2 312.5M420.3 306.5L418.2 312.5M416.5 297.8L420.3 306.5M442.4 348.2L433.5 360.8M434.6 367.4L438.7 368.1M438.7 368.1L451.9 363M422.7 241.7L431.7 239.4M431.7 239.4L434.5 229.8M421.1 252.9L434.8 254.5M418.2 248.7L422.7 241.7M396.8 495.1L400.3 502.4M399.5 504.9L400.3 502.4M376.9 512.6L380.5 515.2M395.1 506.9L389.2 511.8M387 511.2L389.2 511.8M396.3 506.9L395.1 506.9M396.2 494.7L396.8 495.1M380.5 515.2L387 511.2M405.9 511.1L412.7 516M396.2 494.7L394.2 490.1M381.3 481.3L387.6 483.9M391.1 479L387.6 483.9M364.3 588.2L358.1 585.6M354.3 587.3L358.1 585.6M386.9 551L383.6 547.4M377.7 552.5L379.9 556M434.5 229.8L444.2 231.3M530.3 246.3L526.7 239.8M624.1 280.4L625.4 291.1M625.4 291.1L629 294.2M624.1 280.4L614.9 278.6M612.3 279.8L614.9 278.6M558.2 243.7L548.8 248M558.2 243.7L561.5 245.2M548.8 248L548.8 248.3M554.3 236.3L558.2 243.7M583.4 251.1L582.2 250.9M614.9 278.6L614.6 265.4M599.1 276.1L612.3 279.8M593.7 242.4L583.4 251.1M486.2 317.6L484.6 322.7M484.6 322.7L472.6 324M438.2 307.6L439.8 301M432.8 287.5L439.8 301M434.8 254.5L439.5 265.9M510 230.8L502.3 231.5M497.6 241.9L502.3 231.5M495.8 261.2L492.7 256.5M573.7 365.1L573.8 368.4M583.4 360.6L587.2 370.4M582.9 374.7L584.9 374M587.2 370.4L584.9 374M653 266.2L651.8 264.9M651.8 264.9L651.7 258.6M652.9 271.3L653 266.2M647.3 257.8L651.7 258.6M513.3 502L520.1 500.6M521.1 511L512.8 509.3M513.3 502L511.5 504.8M512.8 509.3L511.5 504.8M546.6 483.7L546.3 479.8M546.6 483.7L539.8 487.7M537.3 476.1L535.2 481.7M535.2 481.7L538.7 487.4M538.7 487.4L539.8 487.7M583.3 335.5L582.6 327.1M582.6 327.1L587.2 322.5M587.2 322.5L595.3 321.6M581.7 337L583.3 335.5M408.2 324.5L399.4 327M443 313.4L447.5 322.3M447.5 322.3L449.6 322.5M461 315.3L460.8 316.2M460.8 316.2L449.6 322.5M408.2 324.5L416.7 332.4M427.4 324.2L427.3 325M427.3 325L416.7 332.4M442.3 346.4L438.5 339.3M438.5 339.3L439.3 334.9M442.4 348.2L442.3 346.4M427.3 325L439.3 334.9M443 313.4L439.2 310.5M507.3 521.3L509 517.2M509 517.2L508.8 516.6M383.6 547.4L383.5 544.8M521.1 511L523.2 516.6M512.8 509.3L508.8 516.6M394.2 490.1L399.3 483.4M391.1 479L396.7 479.1M396.7 479.1L399.3 483.4M396.7 479.1L399.7 470.7M488.5 185.9L497.7 194.1M497.7 194.1L505.9 181.8M486.2 186.6L488.5 185.9M497.5 196.4L494.8 199.3M497.5 196.4L497.7 194.1M511.1 182.9L505.9 181.8M466 200.7L463.2 200.9M466 200.7L470.2 207.4M469 197.8L466 200.7M459.6 199.2L463.2 200.9M471.5 207.8L470.2 207.4M471.5 207.8L472.6 215.8M468.5 218.8L468.9 218.7M472.6 215.8L468.9 218.7M469.1 248.3L474.1 247.3M474.1 247.3L474.6 240.9M467.4 240.2L474.6 240.9M599.1 276.1L597.9 277.3M597.9 277.3L600 294.5M600 294.5L603.8 296.4M597.9 277.3L589.8 279.4M577 245.7L566.3 247.1M563.4 245.1L566.3 247.1M582.2 250.9L577 245.7M569.5 260L566.3 247.1M561.5 245.2L563.4 245.1M569.5 260L565.5 262.6M503.3 277.7L499.7 270.3M503.3 277.7L512.2 273.8M499.7 270.3L499.7 262.5M516.6 258.9L516.5 258.7M495.8 261.2L499.7 262.5M495.2 250L492.7 256.5M528.7 250.7L516.5 258.7M530.3 246.3L528.7 250.7M498.7 280.5L502.6 279.2M508.4 291.7L505.7 298M505.7 298L500.6 299.7M498.7 280.5L494.6 279.9M432.8 287.5L434.4 285.5M439.5 265.9L439.4 266.4M439.4 266.4L449.6 273M449.6 273L456.3 268.9M502.6 279.2L503.3 277.7M494.6 279.9L487.7 274.7M487.7 274.7L483.2 280.4M582.9 374.7L579.9 379.2M567.5 375.1L572.2 380.5M573.8 368.4L567.5 375.1M588.1 387L586.6 387.4M579.9 379.2L581.5 384.6M586.6 387.4L581.5 384.6M572.2 380.5L571 385M571 385L573.9 387.6M574.8 393.2L573.9 387.6M574.8 393.2L579.5 392.7M591 389.7L591.9 395.1M591.9 395.1L595.9 395.2M588.1 387L591 389.7M622 466.2L614.7 465.7M560.6 445.7L553.6 442.7M546.3 447.7L547.1 453.1M553.6 442.7L546.3 447.7M550.1 475.6L546.3 479.8M550.1 475.6L549.6 470.7M556.2 466.4L555 461.7M555 461.7L548.1 458.3M556.2 466.4L549.6 470.7M547.1 453.1L546.4 454.9M546.4 454.9L548.1 458.3M538.7 487.4L532.6 491.8M535.7 498.4L532.6 491.8M474 482.1L477.5 483.3M553.6 442.7L551.8 435.2M541 442.8L540.8 440.2M523.2 516.6L529.3 518.4M589 501.3L582.1 494.7M582.1 494.7L579.1 496.1M535.7 498.4L531.2 502.3M530.9 505.6L531.2 502.3M530.9 505.6L535.4 512.4M557.6 493.7L558.3 498M558.3 498L552.6 504.7M556.1 510.3L552.6 504.7M549 485.7L546.6 483.7M577.8 452.1L574.8 459M575.5 447L577.8 452.1M574.8 459L567.6 458.8M567.6 458.8L567 459.2M558.4 484.5L559.1 491.4M559.1 491.4L568.4 492.9M570.5 483.3L570.6 491.5M570.6 491.5L568.4 492.9M549 485.7L558.4 484.5M557.6 493.7L559.1 491.4M579.1 496.1L570.6 491.5M474 460.6L475.8 460.5M573.6 317.8L580.7 312.6M587.2 322.5L582.2 313M582.2 313L580.7 312.6M399.4 327L396.5 333M566.6 311.4L573.6 317.8M562.2 312.2L566.6 311.4M495.7 313.6L486.2 317.6M484.6 322.7L486.1 327.2M495 330.2L486.1 327.2M465.2 325L471.9 324.7M460.8 316.2L465.2 325M466.5 311.1L461 315.3M472.6 324L471.9 324.7M482.4 348.6L484.4 339.7M482.4 348.6L478.3 351M360.1 557.3L355 556.7M354.3 587.3L349.4 584.6M371 561.6L363.1 554.3M371 561.6L373.8 551.8M360.1 557.3L363.1 554.3M377.7 552.5L373.8 551.8M467.4 240.2L465.1 236.3M494.8 199.3L494.2 209.7M472.6 215.8L478.6 215.9M478.6 215.9L480.4 214.1M454.3 205.5L443.8 198.8M443 199.1L439 212.6M443 199.1L443.8 198.8M439 212.6L442 214M459.6 199.2L454.3 205.5M446.9 218.7L442 214M435.1 193.2L443 199.1M444.2 231.3L446.7 227.7M446.7 227.7L446.9 218.7M548.8 248.3L542.8 256.6M540.7 255L542.8 256.6M540.7 255L533.4 256.1M529.3 267.5L533.5 262.1M529.3 267.5L516.6 258.9M533.4 256.1L533.5 262.1M546.8 304.8L547.1 304.7M529.1 306.9L541.6 315.1M541.6 315.1L546.8 304.8M559.3 310.6L560.1 298.4M559.3 310.6L555.5 311.2M555.5 311.2L547.1 304.7M555.8 280L560.8 282.8M529.5 274.5L522.9 280.6M522.9 280.6L522.8 288.6M522.8 288.6L525.8 291.9M529.3 267.5L529.9 269.5M529.9 269.5L529.5 274.5M512.2 273.8L522.9 280.6M508.4 291.7L522.8 288.6M525.7 306.9L525.8 291.9M529.1 306.9L525.7 306.9M529.9 269.5L541.8 268.5M555.8 280L553.9 274.1M553.9 274.1L544.2 273.8M541.8 268.5L542.6 269M544.2 273.8L542.6 269M595.5 321.3L607.5 319.5M595.5 321.3L595.4 310.7M595.4 310.7L603.8 305.8M595.3 321.6L595.5 321.3M603.8 296.4L603.8 305.8M562.9 282.7L567.1 285.5M562.9 282.7L567.7 273.5M567.7 273.5L580.2 274.7M580.2 274.7L580.5 275.4M564.4 267.1L567.7 273.5M560.8 282.8L562.9 282.7M564.4 267.1L565.5 262.6M589.8 279.4L580.5 275.4M500.6 299.7L495.6 304.8M458.8 269.9L456.3 268.9M450.4 275.5L449.6 273M463.5 262L465.9 265.5M463.5 262L464.7 255.5M468.3 254.7L464.7 255.5M458.8 269.9L465.8 267.5M465.8 267.5L465.9 265.5M469.1 248.3L468.3 254.7M465.8 267.5L466.8 268.8M466.5 276.1L466.8 268.8M566.2 359.6L564.4 359.5M564.4 359.5L561.3 356.6M565.4 388.7L571 385M585 390.9L580.3 393.1M580.3 393.1L581.8 398.2M586.6 387.4L585 390.9M579.5 392.7L580.3 393.1M593.3 403.9L591.9 402.6M591.9 402.6L588 402.2M588 402.2L583.8 406M583.8 406L588.4 409.9M605.3 425.2L600.8 430.8M613.8 438.1L606.9 438.6M600.8 430.8L606.9 438.6M600.8 430.8L597.6 430.9M594.5 440.8L595.1 432.7M595.1 432.7L597.6 430.9M593.1 416L588.8 418.3M597.3 419.7L594.8 423.4M594.8 423.4L590.2 423.2M614.4 464.8L610.4 461.7M612.8 451L609.7 452.4M614.7 465.7L614.4 464.8M615.8 445.5L612.8 451M607.4 451.9L609.7 452.4M610.4 461.7L601.6 463.1M601.6 463.1L603.2 472.4M603.7 485.6L599.6 483.9M599.6 483.9L600.7 474.2M603.2 472.4L600.7 474.2M584.8 490.2L584.6 485.9M584.6 485.9L590.9 481.9M590.9 481.9L598.7 484.3M582.1 494.7L584.8 490.2M591.5 472.3L600.7 474.2M599.6 483.9L598.7 484.3M521.4 498.6L525.3 497.7M518.8 489.4L517.8 491.1M510.5 493.3L510.4 493.4M513.3 502L510.4 493.4M520.1 500.6L521.4 498.6M510.5 493.3L517.8 491.1M531.2 502.3L525.3 497.7M490.6 502.8L492 509.5M490.9 511.5L492 509.5M556.2 466.4L557.2 466.9M567 459.2L565.9 464.4M565.9 464.4L557.2 466.9M578.4 466.9L581.1 475.6M572 481.1L568.3 473.9M572 481.1L579.1 480.4M568.3 473.9L569.4 470.5M579.1 480.4L581.1 475.6M565.9 464.4L569.4 470.5M579.4 464.8L578.4 466.9M570.5 483.3L572 481.1M546.4 454.9L536.2 457.4M535.8 462.6L536.2 457.4M566.7 297.2L568.4 295M567.1 285.5L568.4 295M560.1 298.4L566.7 297.2M562.2 312.2L559.3 310.6M391 350.9L386.4 336.1M391 350.9L379.6 354M396.5 333L386.4 336.1M548.3 346.6L546 342.9M547 354.2L548.3 346.6M540.3 341.5L546 342.9M552.4 357.8L561.3 356.6M547.2 354.6L552.4 357.8M547.2 354.6L547 354.2M542.5 318.3L541.3 320.1M541.6 315.1L542.5 318.3M536 333.1L540.3 341.5M536.4 363.7L534.3 366.7M515.5 368.7L525.2 373.2M542.1 363.6L536.4 363.7M547.2 354.6L542.1 363.6M446.7 227.7L453.7 228.3M453.7 228.3L456.1 232.5M486.8 216.1L494.9 211.7M497 213.8L494.9 211.7M480.4 214.1L486.8 216.1M494.2 209.7L494.9 211.7M510.6 213.6L497 213.8M487.3 248.4L488.9 240.5M487.3 248.4L486.3 249.1M486.3 249.1L481.7 247.7M481.7 247.7L480.4 241.7M495.2 250L487.3 248.4M497.6 241.9L488.9 240.5M474.7 240.8L480.4 241.7M474.6 240.9L474.7 240.8M448.1 282.4L445.9 284.3M450.4 275.5L448.1 282.4M434.4 285.5L445.9 284.3M464.8 304.7L468.3 299.6M466.5 311.1L464.8 304.7M471.2 298.9L474.7 293.7M495.7 313.6L495.6 304.8M468.3 299.6L471.2 298.9M470.9 277.4L473.6 284M473.6 284L478.4 282.7M479.8 280.9L478.4 282.7M466.5 276.1L470.9 277.4M483.2 280.4L479.8 280.9M534.3 366.7L538.1 375.7M539.3 375.7L538.1 375.7M565.4 388.7L561.1 387.6M564.3 398.5L558.4 398M561.1 387.6L558.5 389M558.4 398L558.5 389M548.5 384.4L551 387.6M539.3 394.9L540.5 395.9M540.5 395.9L548.4 395.1M548.4 395.1L551 387.6M548.5 383L539.3 375.7M548.5 383L548.5 384.4M564.3 398.5L566.8 403.9M558.4 398L554.9 401.9M548.4 395.1L552.8 402.5M550.6 405.7L552.8 402.5M554.9 401.9L552.8 402.5M554.1 414.3L550.1 410.6M550.1 410.6L550.6 405.7M566.8 403.9L570.6 404.1M581.8 398.2L580 400.6M588.8 418.3L587.4 417.7M588.4 409.9L585.7 413.9M587.4 417.7L585.7 413.9M588.4 425.3L591.4 431.8M588.4 425.3L583.3 425.6M583.3 425.6L582.4 426.8M590.2 423.2L588.4 425.3M595.1 432.7L591.4 431.8M582.3 421L583.3 425.6M607.4 451.9L602.4 454.8M601.6 463.1L601.5 463M602.4 454.8L601.5 463M602.4 454.8L595.5 451.8M477.5 483.3L482.1 481.5M490.6 502.8L495.3 499.8M495.3 499.8L491.4 493.2M478.3 351L478.5 359M478.5 359L472.7 365.3M468.9 365L472.7 365.3M451.9 363L460.3 370.7M468.9 365L460.3 370.7M475.8 460.5L479.4 456.7M487.6 459.8L485 456.6M479.4 456.7L485 456.6M531.5 472.1L526.3 475.2M531.3 467L524.3 464.1M526.3 475.2L520.3 470.8M520.3 470.8L524.3 464.1M537.3 476.1L531.5 472.1M535.8 462.6L531.3 467M498.8 372.6L490.9 374.3M503.9 375.5L498.8 372.6M510 374.7L503.9 375.5M512.3 369.8L510 374.7M506.2 361.2L512.3 369.8M477.1 371L472.7 365.3M490.9 374.3L490.1 378.8M510 374.7L511.3 377M541.3 320.1L527.9 321.2M536 333.1L536 333.1M527.9 321.2L528.4 325.6M536 333.1L528.4 325.6M506.2 361.2L510.4 354.7M512.3 369.8L515.5 368.7M465.1 235.7L461.9 231.6M465.1 235.7L472.3 230.7M472.3 230.7L466.8 225.2M465.1 236.3L465.1 235.7M456.1 232.5L461.9 231.6M468.5 218.8L466.8 225.2M472.3 285.7L471.9 288.7M474.7 293.7L471.9 288.7M473.6 284L472.3 285.7M549.6 426.3L541.8 418.8M541.8 418.8L534.3 426.2M552.1 434.6L549.6 426.3M549.6 426.3L549.6 426.3M551.8 435.2L552.1 434.6M551.1 425.2L549.6 426.3M554.1 414.3L551.1 425.2M540.8 440.2L531.3 435.6M531.3 435.6L533.9 426.3M533.9 426.3L534.3 426.2M530.8 399.2L530.2 403.5M539.3 394.9L530.8 399.2M530.2 403.5L534.7 408.5M534.7 408.5L535 410.3M533.9 426.3L531.8 424.9M531.8 424.9L529.9 415.2M535 410.3L529.9 415.2M520.5 380.3L511.3 377M520.5 380.3L519.5 386.5M519.5 386.5L514.9 388.7M531.3 435.6L530 436.3M518.6 430.1L530 436.3M537.3 376.4L526 376.5M538.1 375.7L537.3 376.4M525.2 373.2L526 376.5M570.6 404.1L572.3 405.8M580 400.6L579.9 402.9M572.3 405.8L579.9 402.9M583.8 406L582.3 405.9M582.3 405.9L579.9 402.9M590.9 469.2L581.9 464M581.9 464L588.5 454.8M590.1 454.7L589.2 454.5M589.2 454.5L588.5 454.8M591.5 472.3L590.9 469.2M579.4 464.8L581.9 464M595.5 451.8L590.1 454.7M586.5 443L594.5 440.8M586.5 443L589.2 454.5M502.8 496L502.4 495.9M510.4 493.4L502.8 496M500 491.8L502.4 495.9M494.2 490.8L491.4 493M494.2 490.8L494 484M491.4 493L485.5 487.7M485.5 487.7L485.6 482.9M491.4 493.2L491.4 493M500 491.8L494.2 490.8M498.9 481.6L494 484M498.9 481.6L495.3 474.4M482.1 481.5L485.6 482.9M511 454.6L520.6 457.8M511 454.6L509.2 455.4M509.2 455.4L507.8 460.9M521.5 457.6L524.3 464.1M536.2 457.4L534.5 455.8M541 442.8L533.9 448.3M533.9 448.3L534.5 455.8M511 454.6L513 445.8M513 445.8L510.2 443.7M492.6 430.9L491.4 439.3M491.4 439.3L496.8 442.1M496.8 442.1L498.2 441.6M498.2 441.6L498.8 440.8M497 453.8L493.6 449.5M493.6 449.5L496.8 442.1M508.9 439.4L498.8 440.8M510.2 443.7L508.9 439.4M477.1 371L475.7 380.7M490.1 378.8L480 385.6M475.7 380.7L480 385.6M528.4 325.6L522.8 331.9M522.8 331.9L513.5 329.3M510.4 354.7L505.7 347.5M484.4 339.7L493.3 339.7M495 330.2L496.4 335.5M493.3 339.7L496.4 335.5M561.9 419.8L566.8 417.2M566.8 417.2L567.5 412.7M575.5 447L575.7 446M586.5 443L583 441M575.7 446L583 441M583 441L582.8 438.9M572.3 405.9L568 412.6M572.6 414.1L568 412.6M572.3 405.8L572.3 405.9M567.5 412.7L568 412.6M572.7 417.8L572.6 414.1M579.1 417.6L583.2 413.7M576.1 419.8L572.7 417.8M578.9 418.5L576.1 419.8M578.9 418.5L579.1 417.6M585.7 413.9L583.2 413.7M582.3 421L578.9 418.5M503.5 471.2L502.4 462.7M503.5 471.2L496.5 471.7M501.5 462.3L502.4 462.7M501.5 462.3L494.6 465.1M495.3 474.4L496.5 471.7M507.8 460.9L502.4 462.7M491.2 460L497 453.8M491.2 460L494.6 465.1M487.6 459.8L491.2 460M516.5 471.5L512.8 469.2M516.5 471.5L516.6 480.7M512.8 469.2L506.3 473M515.8 481.7L516.6 480.7M520.6 457.8L521.5 457.6M520.3 470.8L516.5 471.5M503.5 471.2L506.3 473M518.8 489.4L515.8 481.7M515.6 445.6L519.8 440.4M513 445.8L515.6 445.6M517 431.8L519.8 440.4M517.9 430.4L517 431.8M518.6 430.1L517.9 430.4M496.1 418.5L492.1 419.6M492.1 419.6L485.4 412.6M485.4 412.6L487.4 406.6M487.4 406.6L494.7 403.5M494.7 403.5L498.6 405.6M504 421.9L496.1 418.5M492.6 430.9L488.4 427M488.4 427L492.1 419.6M493.2 393.6L494.7 403.5M506.6 396.4L498.6 405.6M488.4 427L487.6 427.2M515.6 341.2L512.2 329.8M515.6 341.2L506.7 344.7M506.7 344.7L503.3 336.9M513.5 329.3L512.2 329.8M505.7 347.5L506.7 344.7M496.4 335.5L503.3 336.9M517.9 430.4L511.5 422.1M515.5 417.1L511.5 422.1M504 421.9L504.5 421.6M511.5 422.1L504.5 421.6M518.6 397.4L514.1 395.6M518.6 397.4L521.8 405.3M511.2 408.4L512.3 408.8M511.2 408.4L510.6 397.4M512.3 408.8L521 406.5M521.8 405.3L521 406.5M514.9 388.7L514.1 395.6M530.2 403.5L521.8 405.3M515.5 417.1L512.3 408.8M506.6 396.4L510.6 397.4M582.8 438.9L576.2 433.3M582.4 426.8L578.1 428M576.2 433.3L578.1 428M476.3 432L471.1 436.7M467.2 445L468.9 437M468.9 437L471.1 436.7M568.2 426.5L570.4 434.6M568.2 426.5L562 425.2M561.8 425.3L562 425.2M565.2 439L567.7 438.5M576.2 433.3L570.4 434.6M561.9 419.8L562 425.2M551.1 425.2L561.8 425.3M560.6 445.7L565.2 439M575.7 446L567.7 438.5M487.6 427.2L476.7 422.3M476.3 432L474.3 423.8M476.7 422.3L474.3 423.8M471.4 403.7L470.8 394.6M470.8 394.6L480.1 387.8M484.4 392.6L480.1 387.8M469.8 406.4L471.4 403.7M480 385.6L480.1 387.8M493.2 393.6L484.4 392.6M443 402.1L448.7 404.6M469.8 406.4L466.7 407.7M462.2 414.2L464.7 424M462.2 414.2L451.4 413.2M474.3 423.8L464.7 424M466.7 407.7L462.2 414.2M448.7 404.6L451.4 413.2M385 370L395 363L403 360L413 365L420 360L433 358L435 370L440 387L443 400L443 410L448 423L447 445M417 445L474 445M474 445L474 465M417.5 461L457.5 461M457.5 461L457.5 465L489 465M417.5 445L417.5 478M379 448L383 457L390 467L403 473L417 478L425 483L427 490L437 496L445 500L448 505L467 507L483 508L492 512L503 520L522 528M448 505L447 515L435 514L417 513L407 520L400 531L391 548M355 580.7L474 580.7M472 544L490 547L503 552M348 586L357 600L368 604L378 598L393 598L396 603M357 624L370 626L373 613L375 604M427 420L433 437L436 445M500 230L533 230L533 291L530 323M525 202L500 230M533 276L585 276M525 202L542 213L557 227L570 238L580 247L590 253M523 185L525 202M504 410L504 552M503 410L547 410"/>
<path d="M455 155L448 160L440 170L438 180L437 192L425 200L413 210L412 220L413 237L413 250L408 260L402 272L393 285L388 300L387 313L385 323L382 330L378 342L380 357L385 370L387 387L388 403L383 413L380 423L377 430L379 442L378 448L370 453L367 463L366 477L368 490L370 503L362 510L360 520L357 527L357.5 535L355 543L355 559L355 579L348 586L350 599L353 613L357 626L356 640L471.5 640L470.6 624.4L473.3 617L478.7 610L485 604.6L489.5 601.5L492.2 602.4L497.6 600L500.5 595.6L500.5 588.4L498 583.3L494 584L488.6 586.6L481.4 589.3L476 584.8L474.2 579.4L475 572.2L473.3 565L474.2 556L476.9 552L483.2 554.2L490.4 557.8L497.6 560.5L506.6 560.5L513.8 558.7L521 555L524.6 548.8L523.7 541.6L524.6 530.8L528 521L530 517L533 512.5L547 512L563 509L580 505L597 498L608 490L613 482L620 473L623 463L622.5 453L617 447L613 442L615 432L610 428L600 422L592 415L592 408L596 395L597.5 381L597 363L598 350L601 340L602 330L607 320L618 307L630 293L640 282L650 273L667 263L673 255L677 243L675 232L668 227L660 230L658 242L650 250L642 257L633 263L622 267L603 263L587 262L593 252L598 240L607 228L607 223L593 213L572 202L553 195L537 185L525 175L520 165L500 160L470 158Z" fill="none" stroke="#050807" stroke-width="2.5" stroke-linejoin="round"/>
<path d="M586 411L591 409L594 413L593 418L589 421L585 418L587 415Z" fill="#0a0f0c"/>
<path d="M479 596.5L486 595.3L488 599L485 602.5L480 602L477.5 599Z" fill="#6cd3e8" stroke="#050807" stroke-width="2" stroke-linejoin="round"/><circle cx="477" cy="552" r="2" fill="#050807"/>
<g class="lbl"><text x="382" y="256.2" font-size="12" font-weight="bold" text-anchor="middle" fill="#2b2f33" class="hl">Chile</text>
<text x="635.5" y="381.0" font-size="11.3" font-weight="bold" text-anchor="middle" fill="#2b2f33" class="hl">Uruguay</text>
<circle cx="379" cy="191" r="1.9" fill="#fff" stroke="#555" stroke-width=".9"/>
<text x="382.5" y="193.9" font-size="8.2" font-weight="bold" text-anchor="start" fill="#555b5e" class="hl">Antofagasta</text>
<circle cx="358.5" cy="381" r="1.9" fill="#fff" stroke="#555" stroke-width=".9"/>
<text x="355.0" y="384.1" font-size="9" font-weight="normal" text-anchor="end" fill="#3c4043" class="hl">Viña del Mar</text>
<circle cx="341" cy="506" r="1.9" fill="#fff" stroke="#555" stroke-width=".9"/>
<text x="337.5" y="509.1" font-size="9" font-weight="normal" text-anchor="end" fill="#3c4043" class="hl">Temuco</text>
<circle cx="334" cy="569.5" r="1.9" fill="#fff" stroke="#555" stroke-width=".9"/>
<text x="330.5" y="572.6" font-size="8.8" font-weight="normal" text-anchor="end" fill="#3c4043" class="hl">Puerto Montt</text>
<circle cx="632.5" cy="421" r="2.6" fill="#fff" stroke="#333" stroke-width="1"/><circle cx="632.5" cy="421" r="1.2" fill="#333"/>
<text x="636.0" y="424.9" font-size="11" font-weight="normal" text-anchor="start" fill="#3c4043" class="hl">Montevideo</text>
<circle cx="608" cy="489" r="1.9" fill="#fff" stroke="#555" stroke-width=".9"/>
<text x="611.5" y="492.1" font-size="9" font-weight="normal" text-anchor="start" fill="#3c4043" class="hl">Mar del Plata</text>
<circle cx="721" cy="318.5" r="1.9" fill="#fff" stroke="#555" stroke-width=".9"/>
<text x="724.5" y="322.3" font-size="10.8" font-weight="normal" text-anchor="start" fill="#3c4043" class="hl">Porto Alegre</text>
<circle cx="768" cy="269.5" r="1.9" fill="#fff" stroke="#555" stroke-width=".9"/>
<text x="771.5" y="272.6" font-size="8.8" font-weight="normal" text-anchor="start" fill="#3c4043" class="hl">Florianópolis</text>
<circle cx="755" cy="226" r="1.9" fill="#fff" stroke="#555" stroke-width=".9"/>
<text x="758.5" y="229.8" font-size="10.8" font-weight="normal" text-anchor="start" fill="#3c4043" class="hl">Curitiba</text>
<circle cx="802" cy="190" r="1.9" fill="#fff" stroke="#555" stroke-width=".9"/>
<text x="805.5" y="193.8" font-size="10.8" font-weight="normal" text-anchor="start" fill="#3c4043" class="hl">São Paulo</text>
<circle cx="863.5" cy="177" r="1.9" fill="#fff" stroke="#555" stroke-width=".9"/>
<text x="860.0" y="180.7" font-size="10.6" font-weight="normal" text-anchor="end" fill="#3c4043" class="hl">Río de Janeiro</text>
<circle cx="781" cy="144" r="1.9" fill="#fff" stroke="#555" stroke-width=".9"/>
<text x="784.5" y="147.0" font-size="8.5" font-weight="normal" text-anchor="start" fill="#3c4043" class="hl">Ribeirão Preto</text>
<circle cx="662.5" cy="131.5" r="1.9" fill="#fff" stroke="#555" stroke-width=".9"/>
<text x="666.0" y="134.6" font-size="8.8" font-weight="normal" text-anchor="start" fill="#3c4043" class="hl">Campo Grande</text>
<text x="762" y="165.7" font-size="8.1" letter-spacing="1.1" text-anchor="middle" fill="#73858a" class="hl">ESTADO DE</text>
<text x="762" y="174.9" font-size="8.1" letter-spacing="1.1" text-anchor="middle" fill="#73858a" class="hl">SÃO PAULO</text>
<text x="705" y="211.7" font-size="8.1" letter-spacing="1.1" text-anchor="middle" fill="#73858a" class="hl">ESTADO DE</text>
<text x="705" y="220.9" font-size="8.1" letter-spacing="1.1" text-anchor="middle" fill="#73858a" class="hl">PARANÁ</text>
<text x="725" y="258.7" font-size="8.1" letter-spacing="1.1" text-anchor="middle" fill="#73858a" class="hl">SANTA</text>
<text x="725" y="267.9" font-size="8.1" letter-spacing="1.1" text-anchor="middle" fill="#73858a" class="hl">CATARINA</text>
<text x="692" y="295.7" font-size="8.1" letter-spacing="1.1" text-anchor="middle" fill="#73858a" class="hl">RÍO GRANDE</text>
<text x="692" y="304.9" font-size="8.1" letter-spacing="1.1" text-anchor="middle" fill="#73858a" class="hl">DEL SUR</text>
<text x="892" y="153.1" font-size="8.1" letter-spacing="1.1" text-anchor="middle" fill="#73858a" class="hl">ESTADO</text>
<text x="892" y="162.3" font-size="8.1" letter-spacing="1.1" text-anchor="middle" fill="#73858a" class="hl">DE RÍO DE</text>
<text x="892" y="171.5" font-size="8.1" letter-spacing="1.1" text-anchor="middle" fill="#73858a" class="hl">JANEIRO</text></g>
</svg>
</div>
<div id="titlebox" class="abs"><b>Mapa Nacional de Cultivos</b><span>Dirección de Estimaciones Agrícolas</span></div>
<div id="zoomctl" class="abs"><svg width="22" height="44" viewBox="0 0 22 44"><path d="M6.5 11H15.5M11 6.5V15.5M6.5 33.5H15.5" stroke="#555" stroke-width="1.3" fill="none"/><path d="M4 22H18" stroke="#e6e6e6" stroke-width="1"/></svg></div>
<div id="fsbtn" class="abs"><svg width="22" height="22" viewBox="0 0 22 22"><path d="M5 9V5H9M13.5 5H17.5V9M17.5 13V17H13.5M9 17H5V13" stroke="#555" stroke-width="1.7" fill="none"/></svg></div>
<div class="abs" style="left:945px;top:341px;width:6px;height:6px;border-radius:50%;background:#1038d8"></div>
<div id="legend" class="abs panel">
<h3>Referencias</h3>
<div class="lg" style="top:31.0px"><i style="background:#fff;border:1px solid #8a8a8a;"></i><span>Departamentos</span></div>
<div class="lg" style="top:49.7px"><i style="background:#fff;border:1.5px solid #2a2a2a;"></i><span>Delegaciones</span></div>
<div class="lg" style="top:68.4px"><i style="background:#e9e25a;"></i><span>Maíz</span></div>
<div class="lg" style="top:87.1px"><i style="background:#ff9f58;"></i><span>Girasol</span></div>
<div class="lg" style="top:105.8px"><i style="background:#f46d6d;"></i><span>Arroz</span></div>
<div class="lg" style="top:124.5px"><i style="background:#b57cff;"></i><span>Caña de Azúcar</span></div>
<div class="lg" style="top:143.2px"><i style="background:#f0470f;"></i><span>Cereales de Invierno</span></div>
<div class="lg" style="top:161.9px"><i style="background:#e9b24c;"></i><span>Legumbres de Invierno</span></div>
<div class="lg" style="top:180.6px"><i style="background:#2196f3;"></i><span>Colza</span></div>
<div class="lg" style="top:199.3px"><i style="background:#55aa96;"></i><span>Lino</span></div>
<div class="lg" style="top:218.0px"><i style="background:#1a2a6c;"></i><span>Cultivos de Cobertura</span></div>
<div class="lg" style="top:236.7px"><i style="background:#a0e8d0;"></i><span>Otros Cultivos</span></div>
<div class="lg" style="top:255.4px"><i style="background:#f8ecb0;"></i><span>Barbechos y Rastrojos</span></div>
<div class="lg" style="top:274.1px"><i style="background:#f44080;"></i><span>Frutales</span></div>
</div>
<div id="camp" class="abs panel">
<h4>Campañas y Rotaciones</h4>
<div class="cr" style="top:44.2px"><svg style="position:absolute;left:0;top:1px" width="12" height="11" viewBox="0 0 12 11"><path d="M1.2 6.2L4 8.8L11 1.2" fill="none" stroke="#8a8a8a" stroke-width="1.3"/></svg><span>Fina 2025-2026</span></div><div class="sd" style="top:60.5px"><i></i><span>Sin datos</span></div>
<div class="cr" style="top:82.9px"><i></i><span>Gruesa 2024-2025</span></div><div class="sd" style="top:99.2px"><i></i><span>Sin datos</span></div>
<div class="cr" style="top:121.7px"><i></i><span>Fina 2024-2025</span></div><div class="sd" style="top:138.0px"><i></i><span>Sin datos</span></div>
<div class="cr" style="top:160.4px"><i></i><span>Gruesa 2023-2024</span></div><div class="sd" style="top:176.8px"><i></i><span>Sin datos</span></div>
<div class="cr" style="top:199.2px"><i></i><span>Fina 2023-2024</span></div><div class="sd" style="top:215.5px"><i></i><span>Sin datos</span></div>
<div id="metod">Metodología</div>
</div>

<div class="abs edgeL"></div><div class="abs edgeR"></div>
<div id="glogo" class="abs">Google</div>
<div id="attr" class="abs"><div style="left:0;width:92px">Combinaciones de teclas</div><div style="left:94px;width:116px">Datos del mapa ©2026 Google</div><div style="left:212px;width:84px;text-align:left;padding-left:5px">200 km<svg style="position:absolute;left:32px;top:1px" width="50" height="8" viewBox="0 0 50 8"><path d="M.8 2V6.5H46.5V2" fill="none" stroke="#222" stroke-width="1.4"/></svg></div><div style="left:298px;width:40px">Términos</div></div>
<div id="taskbar" class="abs"></div>
<div class="abs" style="left:0;top:635.7px;width:1200px;height:1px;background:#8fc4c4"></div>
<div class="abs" style="left:496px;top:638px;width:29px;height:29px;background:#eef6e2;border-radius:3px"></div>
<svg class="abs" style="left:0;top:637px" width="1200" height="30" viewBox="0 637 1200 30">
<defs>
<linearGradient id="wg" x1="0" y1="0" x2="1" y2="1"><stop offset="0" stop-color="#52c0f4"/><stop offset="1" stop-color="#1079d6"/></linearGradient>
<linearGradient id="eg" x1="0" y1="0" x2="1" y2="1"><stop offset="0" stop-color="#3bd1a0"/><stop offset=".5" stop-color="#1a9be0"/><stop offset="1" stop-color="#0c58b8"/></linearGradient>
<g id="chr"><circle r="9" fill="#fff"/><path d="M0 0L-7.8 -4.5A9 9 0 0 1 7.8 -4.5Z" fill="#e33b2e"/><path d="M0 0L7.8 -4.5A9 9 0 0 1 0 9Z" fill="#f9bb0d"/><path d="M0 0L0 9A9 9 0 0 1 -7.8 -4.5Z" fill="#2da44e"/><circle r="4.3" fill="#fff"/><circle r="3.3" fill="#3b7de8"/></g>
</defs>
<!-- windows -->
<g fill="url(#wg)"><rect x="16.4" y="646.4" width="8.1" height="8.3" rx=".6"/><rect x="25.5" y="646.4" width="8.1" height="8.3" rx=".6"/><rect x="16.4" y="655.7" width="8.1" height="8.3" rx=".6"/><rect x="25.5" y="655.7" width="8.1" height="8.3" rx=".6"/></g>
<!-- search pill -->
<rect x="47" y="644" width="168" height="21.5" rx="10.7" fill="#f2f7e2"/>
<circle cx="59.3" cy="654.5" r="4" fill="none" stroke="#333" stroke-width="1.5"/><path d="M62.2 657.6L65.3 660.8" stroke="#333" stroke-width="1.7" stroke-linecap="round"/>
<text x="74.4" y="659.4" font-size="11.4" fill="#666" textLength="30.6" lengthAdjust="spacingAndGlyphs">Buscar</text>
<!-- thumbnail -->
<path d="M177 663C176 655 182 647 190 646.5C194 645 199 645.5 203 647.5C209 649 212.5 656 211.5 663Z" fill="#2f7d46"/>
<path d="M181 660L185.5 650.5L189 657.5L193.5 648.5L198 658L202 650.5L207 660Z" fill="#e6f1e4" opacity=".85"/>
<path d="M177.5 663C180 660 186 659 194 660C202 659 208 660 211 663Z" fill="#1f5a32"/>
<!-- task view -->
<rect x="233.5" y="647" width="11" height="10.5" rx="1" fill="#f4f4f0"/><rect x="226.7" y="651.5" width="13" height="11.2" rx="1" fill="#1b1b1b"/><rect x="233.5" y="651.5" width="6.2" height="6" fill="#8d8d8a"/>
<!-- store -->
<path d="M265 650V648.3A2 2 0 0 1 267 646.3H272.5A2 2 0 0 1 274.5 648.3V650" fill="none" stroke="#0f58ae" stroke-width="1.5"/>
<rect x="260.5" y="649.5" width="18.5" height="14" rx="2" fill="#1467c4"/>
<rect x="266" y="652.8" width="3.3" height="3.3" fill="#f25022"/><rect x="270.3" y="652.8" width="3.3" height="3.3" fill="#7fba00"/><rect x="266" y="657" width="3.3" height="3.3" fill="#00a4ef"/><rect x="270.3" y="657" width="3.3" height="3.3" fill="#ffb900"/>
<!-- explorer -->
<path d="M295.5 649A1.5 1.5 0 0 1 297 647.5H302L304 649.5H313A1.5 1.5 0 0 1 314.5 651V662A1.5 1.5 0 0 1 313 663.5H297A1.5 1.5 0 0 1 295.5 662Z" fill="#f7c234"/>
<path d="M295.5 652.5H314.5V662A1.5 1.5 0 0 1 313 663.5H297A1.5 1.5 0 0 1 295.5 662Z" fill="#fbd75a"/>
<rect x="295.5" y="659.5" width="19" height="4" rx="1" fill="#3f8fe0"/><rect x="301.5" y="658" width="7" height="2.5" rx="1" fill="#2f78c8"/>
<!-- edge -->
<circle cx="338.7" cy="655" r="9" fill="url(#eg)"/><path d="M332 657C332 651.5 336.5 649.5 340 650.5C344 651.5 345.5 655 343.5 657.5C342 656 339 656 338 658C337 660.5 339.5 663 343 662.5C339 665 332 663 332 657Z" fill="#e9f7fb" opacity=".9"/>
<!-- globe icon -->
<circle cx="373" cy="655" r="8.8" fill="#2b86d8"/><path d="M366 651C369 648 374 647.5 377 649.5C375.5 653 371 653 369.5 656.5C368 659 369.5 662 367.5 662C365 659 364.5 654 366 651Z" fill="#55b947"/><path d="M375 654L381 652.5C382.5 656 381 660 378 662C376 660 377.5 657 375 654Z" fill="#f0a23a"/><path d="M371.5 656.5L377 663.5L374 664L372.5 661L370 663Z" fill="#f5f5f5" stroke="#444" stroke-width=".5"/>
<!-- chrome -->
<use href="#chr" x="407.5" y="655.5"/>
<!-- Ps -->
<rect x="433" y="645.5" width="17.7" height="17.7" rx="1.5" fill="#1d2476"/><rect x="434" y="646.5" width="15.7" height="15.7" rx="1" fill="none" stroke="#6f8fe8" stroke-width=".8"/>
<text x="441.9" y="658.4" font-size="10.5" font-weight="bold" text-anchor="middle" fill="#cfe0ff">Ps</text>
<!-- Br -->
<rect x="467.5" y="645.5" width="17.7" height="17.7" rx="1.5" fill="#352608"/><rect x="468.5" y="646.5" width="15.7" height="15.7" rx="1" fill="none" stroke="#b88a1a" stroke-width=".8"/>
<text x="476.4" y="658.4" font-size="10.5" font-weight="bold" text-anchor="middle" fill="#eaa91f">Br</text>
<!-- active chrome -->
<use href="#chr" x="509" y="656.5"/><circle cx="518" cy="647.3" r="4.8" fill="#8795a0" stroke="#eef6e2" stroke-width=".8"/><text x="518" y="649.8" font-size="6.5" text-anchor="middle" fill="#fff">A</text>
<!-- weather -->
<rect x="891.5" y="645.5" width="4.4" height="13" rx="2.2" fill="#c9a6e8"/><circle cx="893.7" cy="659" r="3.6" fill="#4a7fe0"/><rect x="892.6" y="650" width="2.2" height="9" fill="#4a7fe0"/>
<path d="M901.3 649V661M898.8 658.3L901.3 661.3L903.8 658.3" fill="none" stroke="#2c5fc8" stroke-width="1.5"/>
<text x="911.7" y="652" font-size="10.6" fill="#222" textLength="71.5" lengthAdjust="spacingAndGlyphs">Bajada de las te...</text>
<text x="911.7" y="665.3" font-size="10.3" fill="#6b6f62" textLength="34" lengthAdjust="spacingAndGlyphs">Mañana</text>
<!-- tray -->
<path d="M1014.5 656L1018.5 651.8L1022.5 656" fill="none" stroke="#222" stroke-width="1.4"/>
<rect x="1038.5" y="646.5" width="13" height="13" rx="2.5" fill="#e02424"/><circle cx="1044" cy="652" r="3.6" fill="#fff"/><path d="M1042 652A2 2 0 0 1 1046 652L1044 654Z" fill="#e02424"/><circle cx="1048.5" cy="657.5" r="2.6" fill="#2fae4e" stroke="#fff" stroke-width=".7"/>
<text x="1066.3" y="652" font-size="10.3" fill="#222" textLength="15.4" lengthAdjust="spacingAndGlyphs">ESP</text><text x="1065.7" y="665.3" font-size="10.3" fill="#222" textLength="16.6" lengthAdjust="spacingAndGlyphs">LAA</text>
<path d="M1097.5 650.5H1106.5V658.5H1097.5ZM1100 661H1104" fill="none" stroke="#333" stroke-width="1.2"/><path d="M1106 651.5A2 2 0 1 1 1108 654.5V657" fill="none" stroke="#333" stroke-width="1"/>
<path d="M1116 653.5H1118.5L1122 650.5V660.5L1118.5 657.5H1116Z" fill="none" stroke="#333" stroke-width="1.1" stroke-linejoin="round"/><path d="M1124.5 653.5L1128.5 657.5M1128.5 653.5L1124.5 657.5" stroke="#333" stroke-width="1.1"/>
<text x="1163.3" y="652" font-size="10.3" fill="#222" textLength="22.7" lengthAdjust="spacingAndGlyphs">09:59</text><text x="1141.7" y="665.3" font-size="10.3" fill="#222" textLength="44.3" lengthAdjust="spacingAndGlyphs">20/3/2026</text>
</svg>

<svg class="abs" style="left:0;top:0" width="1200" height="123" viewBox="0 0 1200 123">
<!-- tab bar icons -->
<path d="M12.2 13.8L15.5 17L18.8 13.8" fill="none" stroke="#2f4a52" stroke-width="1.7" stroke-linecap="round" stroke-linejoin="round"/>
<path d="M43.3 9.5C46.5 12.5 46.8 17 43.3 20.5C39.8 17 40.1 12.5 43.3 9.5Z" fill="#4f7f7a"/><path d="M43.3 14V20M41.7 16.5L43.3 18L44.9 16.5" stroke="#cfe7ec" stroke-width=".6" fill="none"/>
<path d="M196.8 12.4L203.2 18.8M203.2 12.4L196.8 18.8" stroke="#333" stroke-width="1.3"/>
<path d="M382.6 12.4L389 18.8M389 12.4L382.6 18.8" stroke="#222" stroke-width="1.4"/>
<path d="M409.5 15.6H418.5M414 11.1V20.1" stroke="#333" stroke-width="1.3"/>
<!-- favicon gee -->
<g transform="translate(229.4 15.6)"><path d="M0 -6.2L2.3 -3.8L5.5 -4.6L5.2 -1.2L6.5 1.8L3.6 3L2.5 6L-0.6 4.8L-3.8 5.6L-4.4 2.4L-6.4 -0.4L-4 -2.5L-3.4 -5.6Z" fill="#5a6fd0"/><circle r="2.4" fill="#dfe6ff"/><circle cx="3" cy="-2" r="1.3" fill="#7fb0f0"/></g>
<!-- window controls -->
<path d="M1107 14.7H1115.2" stroke="#333" stroke-width="1.1"/>
<rect x="1141.5" y="13.4" width="6.8" height="6" rx="1.5" fill="none" stroke="#333" stroke-width="1.1"/><path d="M1143.5 13.4V13A1.5 1.5 0 0 1 1145 11.5H1148.7A1.5 1.5 0 0 1 1150.2 13V16.5A1.5 1.5 0 0 1 1148.7 18H1148.3" fill="none" stroke="#333" stroke-width="1.1"/>
<path d="M1177.8 10.8L1186.5 19.5M1186.5 10.8L1177.8 19.5" stroke="#333" stroke-width="1.1"/>
<!-- nav -->
<path d="M22.5 49H11.5M16 44.5L11.5 49L16 53.5" fill="none" stroke="#a9b8bd" stroke-width="1.4" stroke-linecap="round" stroke-linejoin="round"/>
<path d="M39.5 49H50.5M46 44.5L50.5 49L46 53.5" fill="none" stroke="#a9b8bd" stroke-width="1.4" stroke-linecap="round" stroke-linejoin="round"/>
<path d="M77.6 46.2A5 5 0 1 0 78.2 50.8" fill="none" stroke="#333" stroke-width="1.5" stroke-linecap="round"/><path d="M78.6 43.4V47H75" fill="none" stroke="#333" stroke-width="1.5" stroke-linecap="round" stroke-linejoin="round"/>
<circle cx="107.3" cy="49" r="9.8" fill="#f1f9fb"/>
<path d="M102.5 46.3H106.5M110.5 46.3H112M102.5 51.7H104M108 51.7H112" stroke="#333" stroke-width="1.4" stroke-linecap="round"/><circle cx="108.6" cy="46.3" r="1.7" fill="none" stroke="#333" stroke-width="1.3"/><circle cx="106" cy="51.7" r="1.7" fill="#333"/>
<!-- right toolbar -->
<rect x="1041.7" y="43.5" width="8.5" height="9" rx="1" fill="#3c4a50"/><text x="1046" y="50.8" font-size="7" font-weight="bold" text-anchor="middle" fill="#eaf4f7">G</text><rect x="1047.5" y="46.5" width="7.7" height="9" rx="1" fill="#e3eff3" stroke="#3c4a50" stroke-width="1"/><text x="1051.4" y="53.7" font-size="6.5" text-anchor="middle" fill="#3c4a50">文</text>
<g transform="translate(1073.2 49.8) scale(.86) translate(-1073.2 -49.5)"><path d="M1073.2 43.6L1075 47.4L1079.2 47.9L1076.1 50.7L1076.9 54.8L1073.2 52.7L1069.5 54.8L1070.3 50.7L1067.2 47.9L1071.4 47.4Z" fill="none" stroke="#333" stroke-width="1.5" stroke-linejoin="round"/></g>
<path d="M1108 46H1111.5A1.8 1.8 0 0 1 1115 46H1118.5V49.2A1.8 1.8 0 0 1 1118.5 52.8V55H1108V52.5A1.8 1.8 0 0 0 1108 49Z" fill="none" stroke="#333" stroke-width="1.4" stroke-linejoin="round"/>
<path d="M1133.5 44V55" stroke="#c5dde2" stroke-width="1"/>
<circle cx="1154.7" cy="49.2" r="7.8" fill="#8196a1"/><text x="1154.7" y="52" font-size="7.5" text-anchor="middle" fill="#fff">A</text>
<circle cx="1183" cy="44.5" r="1.1" fill="#333"/><circle cx="1183" cy="49.5" r="1.1" fill="#333"/><circle cx="1183" cy="54.5" r="1.1" fill="#333"/>
<!-- header: emblem -->
<g transform="translate(29.8 95)">
<ellipse rx="9.3" ry="13.6" fill="none" stroke="#8d8d8d" stroke-width="2.6" stroke-dasharray="1.7 .8"/>
<ellipse rx="5.9" ry="9.4" fill="#f4f4f4" stroke="#7a7a7a" stroke-width=".9"/>
<path d="M-5.8 0.5H5.8A5.9 9.4 0 0 1 -5.8 .5Z" fill="#dedede"/>
<path d="M0 -5.5V6.5M-3 1.5C-1.5 3 1.5 3 3 1.5M-1.7 -6C-1.7 -8 1.7 -8 1.7 -6Z" fill="none" stroke="#6a6a6a" stroke-width=".9"/>
<circle cy="-16" r="2.3" fill="#bdbdbd" stroke="#8a8a8a" stroke-width=".6"/>
<path d="M-4.5 -17.5L-6.5 -18.5M4.5 -17.5L6.5 -18.5M0 -19V-20.5M-3 -19L-4 -20.5M3 -19L4 -20.5" stroke="#9a9a9a" stroke-width=".6"/>
<path d="M-6 16.5L0 13.5L6 16.5M-4.5 18L4.5 14M4.5 18L-4.5 14" fill="none" stroke="#8a8a8a" stroke-width=".9"/>
</g>
<!-- search icon -->
<circle cx="311.8" cy="92.8" r="3.7" fill="none" stroke="#222" stroke-width="1.5"/><path d="M314.5 95.6L317.8 99" stroke="#222" stroke-width="1.6" stroke-linecap="round"/>
<!-- gee icon -->
<g transform="translate(972.5 93)"><path d="M0 -6.8L2.5 -4.2L6 -5L5.7 -1.3L7.1 2L4 3.3L2.7 6.6L-0.7 5.3L-4.2 6.1L-4.8 2.6L-7 -0.4L-4.4 -2.7L-3.7 -6.1Z" fill="#6f87e0"/><circle r="3" fill="#e6ecff"/><circle cx="3.2" cy="-2.3" r="1.5" fill="#62a8ee"/></g>
</svg>
<div class="abs serif" style="left:46.3px;top:86.3px;font-size:8.5px;font-weight:bold;line-height:7.8px;color:#3a3a3a;white-space:nowrap">Ministerio<br>de Economía</div>
<div class="abs serif" style="left:46.3px;top:102.8px;font-size:5.3px;line-height:6px;color:#777;white-space:nowrap">República Argentina</div>
<div class="abs serif" style="left:110px;top:86px;font-size:8.540px;font-weight:bold;line-height:8.2px;color:#333;white-space:nowrap">Secretaría de Agricultura,<br>Ganadería y Pesca</div>
<div id="sp" class="abs">Search places</div>
<div id="gee" class="abs">Google Earth Engine Apps</div>

</body>
</html>
